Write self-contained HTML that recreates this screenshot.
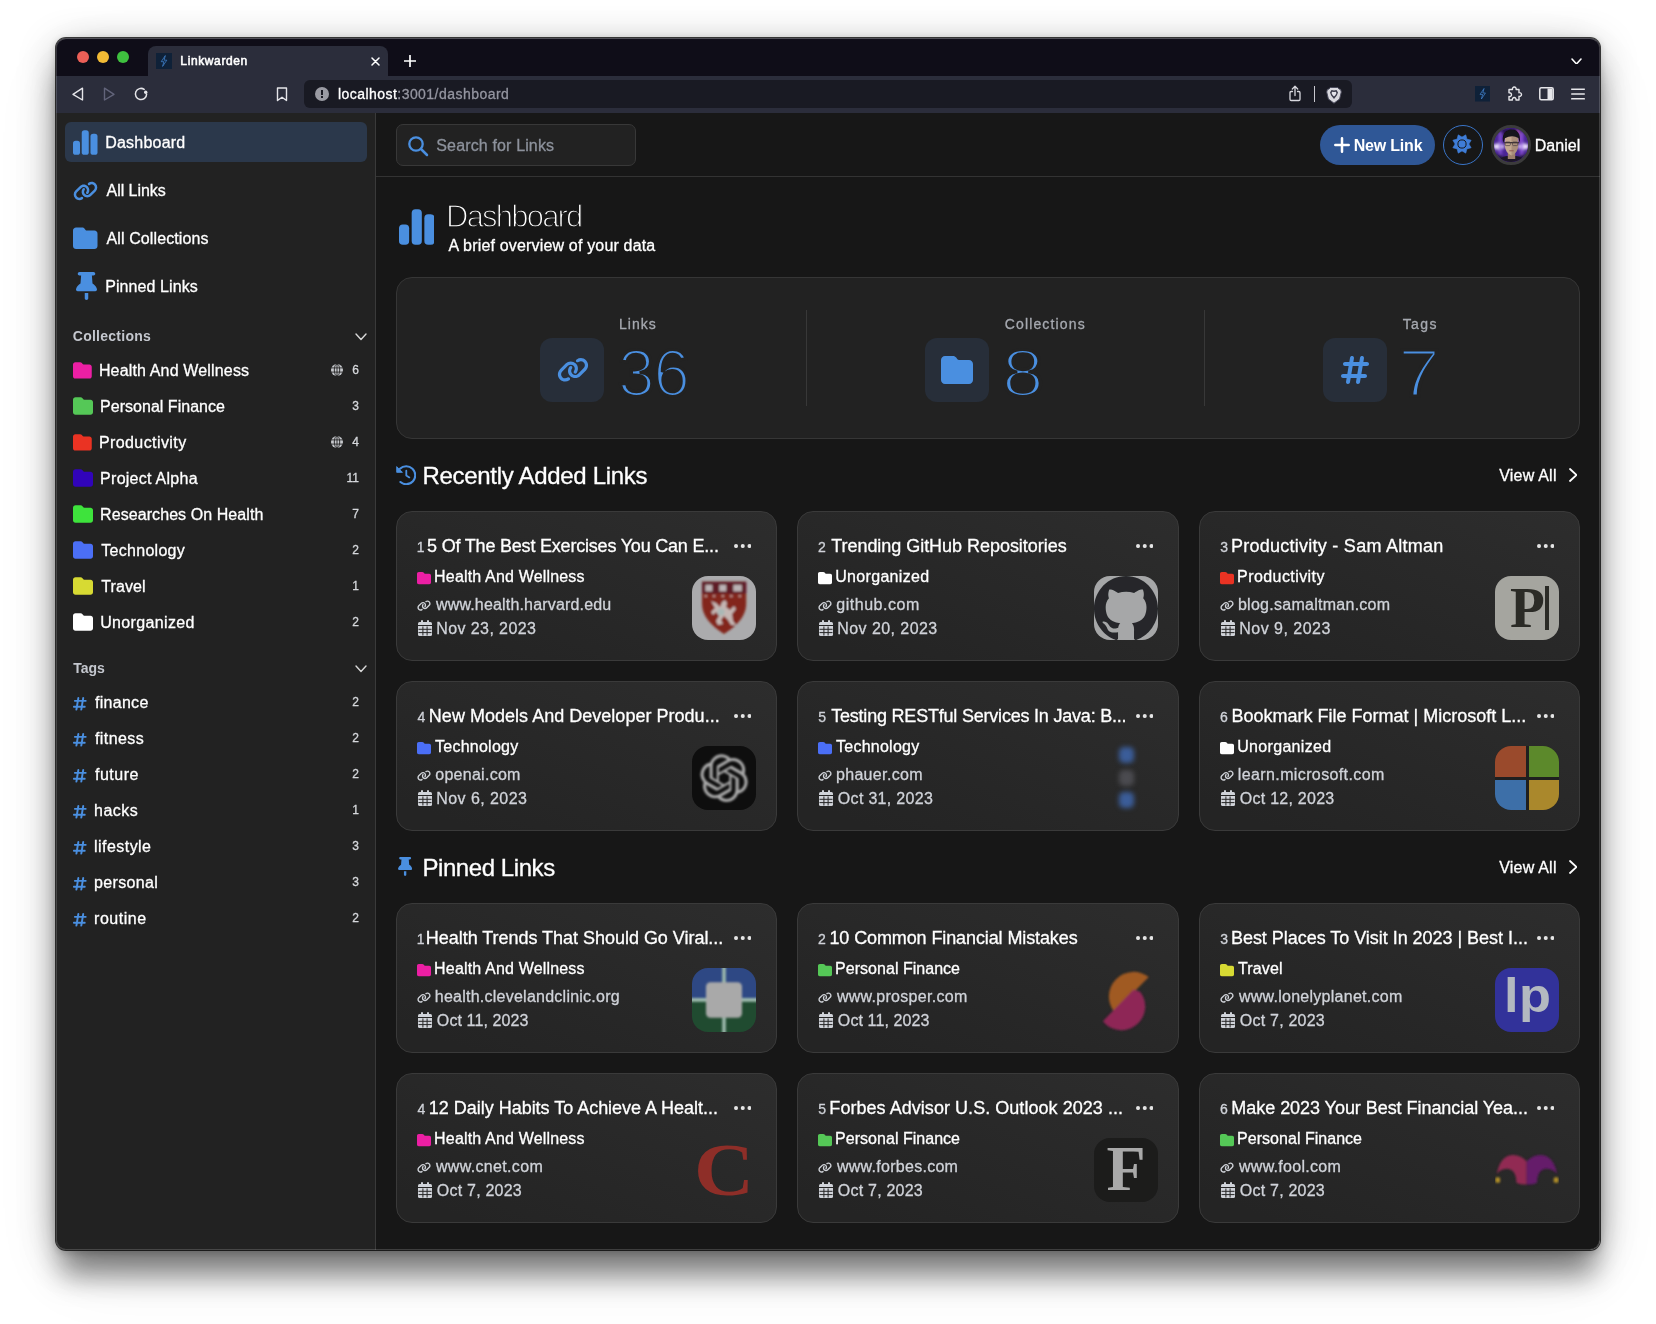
<!DOCTYPE html>
<html lang="en"><head><meta charset="utf-8"><title>Linkwarden</title>
<style>
html,body{margin:0;padding:0;background:#fff;}
body{width:1656px;height:1324px;position:relative;overflow:hidden;font-family:"Liberation Sans",sans-serif;}
#win{position:absolute;left:56px;top:38px;width:1544px;height:1212px;border-radius:10px;overflow:hidden;background:#171717;}
#shadow{position:absolute;left:56px;top:38px;width:1544px;height:1212px;border-radius:10px;box-shadow:0 0 0 1px rgba(0,0,0,.75),0 8px 42px -6px rgba(0,0,0,.42),0 32px 28px -5px rgba(0,0,0,.36),0 2px 6px 2px rgba(0,0,0,.13),0 26px 70px -12px rgba(0,0,0,.1);}
#rim{position:absolute;left:56px;top:38px;width:1544px;height:1212px;border-radius:10px;box-sizing:border-box;border:1px solid rgba(255,255,255,.17);border-top-color:rgba(255,255,255,.28);pointer-events:none;}
#abs{position:absolute;left:-56px;top:-38px;width:1656px;height:1324px;will-change:transform;}
.t{position:absolute;white-space:nowrap;line-height:1;-webkit-text-stroke:.3px;}
.card{position:absolute;box-sizing:border-box;border:1px solid #3a3a3a;border-radius:16px;background:linear-gradient(to top right,#242424 10%,#2d2d2d);}
.thin{-webkit-text-stroke:1.3px #171717;}
.thin2{-webkit-text-stroke:3.2px #222;}
</style></head><body>
<div id="shadow"></div>
<div id="win"><div id="abs">

<div style="position:absolute;left:56.00px;top:38.00px;width:1544.00px;height:38.00px;background:#0f0d18;"></div>
<div style="position:absolute;left:56.00px;top:76.00px;width:1544.00px;height:37.00px;background:#2b2d3b;"></div>
<div style="position:absolute;left:148.00px;top:46.00px;width:240.00px;height:31.00px;background:#2b2d3b;border-radius:8px 8px 0 0;"></div>
<div style="position:absolute;left:77.00px;top:51.00px;width:12.00px;height:12.00px;background:#ec5f57;border-radius:50%;"></div>
<div style="position:absolute;left:97.00px;top:51.00px;width:12.00px;height:12.00px;background:#f3bb35;border-radius:50%;"></div>
<div style="position:absolute;left:117.00px;top:51.00px;width:12.00px;height:12.00px;background:#3fc13f;border-radius:50%;"></div>
<svg style="position:absolute;left:156.00px;top:53.00px;" width="16.00" height="16.00" viewBox="0 0 16 16"><rect width="16" height="16" fill="#0f2138"/><path d="M9.300 2.600 L5.200 8.700 H7.900 L6.600 13.400 L10.800 7.200 H8.100 Z" fill="none" stroke="#3f7fc8" stroke-width="0.8" stroke-linejoin="round"/></svg>
<div class="t" style="top:55.00px;font-size:12px;color:#fff;letter-spacing:0.617px;left:180.35px;-webkit-text-stroke:.55px;">Linkwarden</div>
<svg style="position:absolute;left:371.00px;top:56.50px;" width="9.00" height="9.00" viewBox="0 0 9 9"><path d="M1 1L8 8M8 1L1 8" stroke="#fff" stroke-width="1.500" stroke-linecap="round"/></svg>
<svg style="position:absolute;left:404.00px;top:55.00px;" width="12.00" height="12.00" viewBox="0 0 12 12"><path d="M6 0.500V11.500M0.500 6H11.500" stroke="#fff" stroke-width="1.700" stroke-linecap="round"/></svg>
<svg style="position:absolute;left:1570.50px;top:57.52px;" width="11.00" height="6.95" viewBox="-1 -1 11 6.95"><polyline points="0,0 4.5,4.95 9,0" fill="none" stroke="#fff" stroke-width="1.6" stroke-linecap="round" stroke-linejoin="round"/></svg>
<svg style="position:absolute;left:71.00px;top:86.00px;" width="14.00" height="16.00" viewBox="0 0 14 16"><path d="M11.500 2.200 L2 8.300 L11.500 14 Z" fill="none" stroke="#e6e6ea" stroke-width="1.400" stroke-linejoin="round"/></svg>
<svg style="position:absolute;left:102.00px;top:86.00px;" width="14.00" height="16.00" viewBox="0 0 14 16"><path d="M2.500 2.200 L12 8.300 L2.500 14 Z" fill="none" stroke="#62647a" stroke-width="1.400" stroke-linejoin="round"/></svg>
<svg style="position:absolute;left:133.00px;top:86.00px;" width="16.00" height="16.00" viewBox="0 0 16 16"><path d="M13.600 8 A5.600 5.600 0 1 1 11.200 3.400" fill="none" stroke="#e6e6ea" stroke-width="1.500" stroke-linecap="round"/><circle cx="12.700" cy="6.200" r="1.700" fill="#e6e6ea"/></svg>
<svg style="position:absolute;left:276.00px;top:86.50px;" width="12.00" height="15.00" viewBox="0 0 12 15"><path d="M1.500 1 H10.500 V13.500 L6 10.200 L1.500 13.500 Z" fill="none" stroke="#e6e6ea" stroke-width="1.400" stroke-linejoin="round"/></svg>
<div style="position:absolute;left:304.00px;top:80.00px;width:1048.00px;height:28.00px;background:#191a23;border-radius:6px;"></div>
<div style="position:absolute;left:315.00px;top:87.00px;width:14.00px;height:14.00px;background:#9a9ba3;border-radius:50%;"></div>
<div style="position:absolute;left:321.30px;top:90.00px;width:1.60px;height:5.00px;background:#191a23;"></div>
<div style="position:absolute;left:321.30px;top:96.30px;width:1.60px;height:1.70px;background:#191a23;"></div>
<div class="t" style="top:87.00px;font-size:14px;color:#fff;letter-spacing:0.460px;left:337.90px;">localhost</div>
<div class="t" style="top:87.00px;font-size:14px;color:#9495a0;letter-spacing:0.460px;left:397.29px;">:3001/dashboard</div>
<svg style="position:absolute;left:1288.00px;top:85.00px;" width="14.00" height="17.00" viewBox="0 0 14 17"><path d="M4.500 6.500H3.200Q2 6.500 2 7.700V14.300Q2 15.500 3.200 15.500H10.800Q12 15.500 12 14.300V7.700Q12 6.500 10.800 6.500H9.500" fill="none" stroke="#d8d8de" stroke-width="1.300" stroke-linecap="round"/><path d="M7 10.500V1.500M4.300 4L7 1.300L9.700 4" fill="none" stroke="#d8d8de" stroke-width="1.300" stroke-linecap="round" stroke-linejoin="round"/></svg>
<div style="position:absolute;left:1314.00px;top:86.00px;width:1.00px;height:15.50px;background:#c8c8cf;"></div>
<svg style="position:absolute;left:1326.00px;top:85.50px;" width="16.00" height="18.00" viewBox="0 0 16 18"><path d="M4.200 1.500 H11.800 L13 3 L14.600 3.400 L15.300 6 L13.600 13 L8 17.200 L2.400 13 L0.700 6 L1.400 3.400 L3 3 Z" fill="#d9d9df" stroke="#4a4b5c" stroke-width="1"/><path d="M8 4.500 L10.500 4 L12 6.500 L10.800 9.500 L8 13 L5.200 9.500 L4 6.500 L5.500 4 Z" fill="#3a3b4a"/><path d="M8 6 L9.800 5.800 L10.500 7 L9.500 9 L8 10.500 L6.500 9 L5.500 7 L6.200 5.800Z" fill="#e4e4ea"/></svg>
<svg style="position:absolute;left:1474.50px;top:86.00px;" width="15.50" height="15.50" viewBox="0 0 16 16"><rect width="16" height="16" fill="#0f2138"/><path d="M9.300 2.600 L5.200 8.700 H7.900 L6.600 13.400 L10.800 7.200 H8.100 Z" fill="none" stroke="#3f7fc8" stroke-width="0.8" stroke-linejoin="round"/></svg>
<svg style="position:absolute;left:1505.50px;top:85.50px;" width="17.00" height="17.00" viewBox="0 0 17 17"><path d="M6.500 3.500 a1.900 1.900 0 1 1 3.600 0 H13 V6.700 a1.900 1.900 0 1 1 0 3.600 V14 H10 a1.900 1.900 0 1 0 -3.600 0 H3 V10.500 a1.900 1.900 0 1 0 0 -3.600 V3.500 Z" fill="none" stroke="#e6e6ea" stroke-width="1.400" stroke-linejoin="round"/></svg>
<svg style="position:absolute;left:1538.50px;top:87.00px;" width="15.00" height="13.50" viewBox="0 0 15 13.500"><rect x="0.800" y="0.800" width="13.400" height="11.900" rx="1.500" fill="none" stroke="#e6e6ea" stroke-width="1.500"/><rect x="8.500" y="1.500" width="5" height="10.500" fill="#e6e6ea"/></svg>
<svg style="position:absolute;left:1571.00px;top:88.00px;" width="14.00" height="12.00" viewBox="0 0 14 12"><path d="M0.700 1.200H13.300M0.700 6H13.300M0.700 10.800H13.300" stroke="#e6e6ea" stroke-width="1.500" stroke-linecap="round"/></svg>
<div style="position:absolute;left:56.00px;top:113.00px;width:319.00px;height:1137.00px;background:#222;"></div>
<div style="position:absolute;left:375.00px;top:113.00px;width:1.00px;height:1137.00px;background:#3a3a3a;"></div>
<div style="position:absolute;left:65.00px;top:122.00px;width:302.00px;height:40.00px;background:#2b384b;border-radius:6px;"></div>
<svg style="position:absolute;left:73.00px;top:129.50px;" width="24.50" height="25.00" viewBox="0 0 448 448"><g fill="#4a8fe0"><rect x="0" y="192" width="128" height="256" rx="48"/><rect x="160" y="0" width="128" height="448" rx="48"/><rect x="320" y="64" width="128" height="384" rx="48"/></g></svg>
<div class="t" style="top:135.00px;font-size:16px;color:#fff;letter-spacing:0.219px;left:105.20px;">Dashboard</div>
<svg style="position:absolute;left:72.50px;top:180.50px;" width="25.00" height="20.00" viewBox="0 0 640 512"><path fill="#4a8fe0" d="M579.8 267.7c56.5-56.5 56.5-148 0-204.5c-50-50-128.800-56.500-186.300-15.400l-1.600 1.100c-14.400 10.300-17.700 30.300-7.400 44.600s30.300 17.700 44.600 7.400l1.600-1.100c32.100-22.900 76-19.300 103.800 8.600c31.500 31.500 31.500 82.500 0 114L422.300 334.800c-31.500 31.500-82.500 31.500-114 0c-27.900-27.900-31.500-71.800-8.600-103.800l1.100-1.600c10.300-14.400 6.900-34.400-7.400-44.600s-34.400-6.900-44.600 7.400l-1.100 1.600C206.500 251.200 213 330 263 380c56.500 56.500 148 56.500 204.500 0L579.800 267.700zM60.200 244.300c-56.500 56.500-56.500 148 0 204.500c50 50 128.800 56.500 186.300 15.400l1.600-1.100c14.400-10.300 17.700-30.300 7.400-44.600s-30.300-17.700-44.600-7.400l-1.600 1.100c-32.100 22.900-76 19.300-103.800-8.600C74 372 74 321 105.500 289.500L217.700 177.200c31.500-31.500 82.500-31.500 114 0c27.900 27.900 31.500 71.800 8.600 103.900l-1.100 1.600c-10.300 14.400-6.900 34.400 7.400 44.600s34.400 6.900 44.600-7.400l1.100-1.600C433.500 260.800 427 182 377 132c-56.500-56.500-148-56.500-204.500 0L60.200 244.300z"/></svg>
<div class="t" style="top:183.00px;font-size:16px;color:#fff;letter-spacing:-0.037px;left:106.50px;">All Links</div>
<svg style="position:absolute;left:73.00px;top:226.00px;" width="24.50" height="24.50" viewBox="0 0 512 512"><path fill="#4a8fe0" d="M64 480H448c35.300 0 64-28.700 64-64V160c0-35.300-28.700-64-64-64H288c-10.100 0-19.600-4.700-25.600-12.800L243.200 57.600C231.100 41.500 212.100 32 192 32H64C28.700 32 0 60.700 0 96V416c0 35.300 28.700 64 64 64z"/></svg>
<div class="t" style="top:231.00px;font-size:16px;color:#fff;letter-spacing:0.111px;left:106.50px;">All Collections</div>
<svg style="position:absolute;left:76.00px;top:272.00px;" width="21.00" height="28.00" viewBox="0 0 384 512"><path fill="#4a8fe0" d="M32 32C32 14.300 46.300 0 64 0H320c17.700 0 32 14.300 32 32s-14.300 32-32 32H290.500l11.400 148.200c36.700 19.900 65.700 53.200 79.500 94.700l1 3c3.300 9.800 1.600 20.500-4.400 28.800s-15.700 13.300-26 13.300H32c-10.300 0-19.900-4.900-26-13.300s-7.700-19.100-4.400-28.800l1-3c13.800-41.500 42.800-74.800 79.500-94.700L93.500 64H64C46.300 64 32 49.700 32 32zM160 384h64v96c0 17.700-14.300 32-32 32s-32-14.300-32-32V384z"/></svg>
<div class="t" style="top:279.00px;font-size:16px;color:#fff;letter-spacing:0.091px;left:105.20px;">Pinned Links</div>
<div class="t" style="top:329.00px;font-size:14px;color:#c4c7ce;letter-spacing:0.265px;font-weight:700;-webkit-text-stroke:0;left:72.75px;">Collections</div>
<svg style="position:absolute;left:355.00px;top:333.25px;" width="12.00" height="7.50" viewBox="-1 -1 12 7.5"><polyline points="0,0 5.0,5.5 10,0" fill="none" stroke="#d8d8d8" stroke-width="1.4" stroke-linecap="round" stroke-linejoin="round"/></svg>
<svg style="position:absolute;left:73.10px;top:360.82px;" width="18.75" height="18.75" viewBox="0 0 512 512"><path fill="#ec1fa4" d="M64 480H448c35.300 0 64-28.700 64-64V160c0-35.300-28.700-64-64-64H288c-10.100 0-19.600-4.700-25.600-12.800L243.200 57.600C231.100 41.500 212.100 32 192 32H64C28.700 32 0 60.700 0 96V416c0 35.300 28.700 64 64 64z"/></svg>
<div class="t" style="top:363.00px;font-size:16px;color:#fff;letter-spacing:0.156px;left:98.90px;">Health And Wellness</div>
<div class="t" style="top:364.00px;font-size:12px;color:#d6d8dc;left:-241.00px;width:600px;text-align:right;">6</div>
<svg style="position:absolute;left:331.00px;top:364.00px;" width="12.00" height="12.00" viewBox="-6.0 -6.0 12 12"><circle cx="0" cy="0" r="6.0" fill="#c6c8cc"/><g stroke="#222" stroke-width="0.9" fill="none"><ellipse cx="0" cy="0" rx="2.7" ry="6.0"/><line x1="-6.0" y1="-2.0999999999999996" x2="6.0" y2="-2.0999999999999996"/><line x1="-6.0" y1="2.0999999999999996" x2="6.0" y2="2.0999999999999996"/><line x1="0" y1="-6.0" x2="0" y2="6.0"/></g></svg>
<svg style="position:absolute;left:73.10px;top:396.20px;" width="20.00" height="20.00" viewBox="0 0 512 512"><path fill="#55c857" d="M64 480H448c35.300 0 64-28.700 64-64V160c0-35.300-28.700-64-64-64H288c-10.100 0-19.600-4.700-25.600-12.800L243.200 57.600C231.100 41.500 212.100 32 192 32H64C28.700 32 0 60.700 0 96V416c0 35.300 28.700 64 64 64z"/></svg>
<div class="t" style="top:399.00px;font-size:16px;color:#fff;letter-spacing:0.020px;left:100.10px;">Personal Finance</div>
<div class="t" style="top:400.00px;font-size:12px;color:#d6d8dc;left:-241.00px;width:600px;text-align:right;">3</div>
<svg style="position:absolute;left:73.10px;top:432.82px;" width="18.75" height="18.75" viewBox="0 0 512 512"><path fill="#ea3323" d="M64 480H448c35.300 0 64-28.700 64-64V160c0-35.300-28.700-64-64-64H288c-10.100 0-19.600-4.700-25.600-12.800L243.200 57.600C231.100 41.500 212.100 32 192 32H64C28.700 32 0 60.700 0 96V416c0 35.300 28.700 64 64 64z"/></svg>
<div class="t" style="top:435.00px;font-size:16px;color:#fff;letter-spacing:0.418px;left:98.90px;">Productivity</div>
<div class="t" style="top:436.00px;font-size:12px;color:#d6d8dc;left:-241.00px;width:600px;text-align:right;">4</div>
<svg style="position:absolute;left:331.00px;top:436.00px;" width="12.00" height="12.00" viewBox="-6.0 -6.0 12 12"><circle cx="0" cy="0" r="6.0" fill="#c6c8cc"/><g stroke="#222" stroke-width="0.9" fill="none"><ellipse cx="0" cy="0" rx="2.7" ry="6.0"/><line x1="-6.0" y1="-2.0999999999999996" x2="6.0" y2="-2.0999999999999996"/><line x1="-6.0" y1="2.0999999999999996" x2="6.0" y2="2.0999999999999996"/><line x1="0" y1="-6.0" x2="0" y2="6.0"/></g></svg>
<svg style="position:absolute;left:73.10px;top:468.20px;" width="20.00" height="20.00" viewBox="0 0 512 512"><path fill="#3104ba" d="M64 480H448c35.300 0 64-28.700 64-64V160c0-35.300-28.700-64-64-64H288c-10.100 0-19.600-4.700-25.600-12.800L243.200 57.600C231.100 41.500 212.100 32 192 32H64C28.700 32 0 60.700 0 96V416c0 35.300 28.700 64 64 64z"/></svg>
<div class="t" style="top:471.00px;font-size:16px;color:#fff;letter-spacing:0.267px;left:100.10px;">Project Alpha</div>
<div class="t" style="top:472.00px;font-size:12px;color:#d6d8dc;left:-241.00px;width:600px;text-align:right;">11</div>
<svg style="position:absolute;left:73.10px;top:504.20px;" width="20.00" height="20.00" viewBox="0 0 512 512"><path fill="#3ee33c" d="M64 480H448c35.300 0 64-28.700 64-64V160c0-35.300-28.700-64-64-64H288c-10.100 0-19.600-4.700-25.600-12.800L243.200 57.600C231.100 41.500 212.100 32 192 32H64C28.700 32 0 60.700 0 96V416c0 35.300 28.700 64 64 64z"/></svg>
<div class="t" style="top:507.00px;font-size:16px;color:#fff;letter-spacing:0.071px;left:100.10px;">Researches On Health</div>
<div class="t" style="top:508.00px;font-size:12px;color:#d6d8dc;left:-241.00px;width:600px;text-align:right;">7</div>
<svg style="position:absolute;left:73.10px;top:540.20px;" width="20.00" height="20.00" viewBox="0 0 512 512"><path fill="#4b6ff6" d="M64 480H448c35.300 0 64-28.700 64-64V160c0-35.300-28.700-64-64-64H288c-10.100 0-19.600-4.700-25.600-12.800L243.200 57.600C231.100 41.500 212.100 32 192 32H64C28.700 32 0 60.700 0 96V416c0 35.300 28.700 64 64 64z"/></svg>
<div class="t" style="top:543.00px;font-size:16px;color:#fff;letter-spacing:0.289px;left:101.25px;">Technology</div>
<div class="t" style="top:544.00px;font-size:12px;color:#d6d8dc;left:-241.00px;width:600px;text-align:right;">2</div>
<svg style="position:absolute;left:73.10px;top:576.20px;" width="20.00" height="20.00" viewBox="0 0 512 512"><path fill="#d7da33" d="M64 480H448c35.300 0 64-28.700 64-64V160c0-35.300-28.700-64-64-64H288c-10.100 0-19.600-4.700-25.600-12.800L243.200 57.600C231.100 41.500 212.100 32 192 32H64C28.700 32 0 60.700 0 96V416c0 35.300 28.700 64 64 64z"/></svg>
<div class="t" style="top:579.00px;font-size:16px;color:#fff;letter-spacing:0.110px;left:101.25px;">Travel</div>
<div class="t" style="top:580.00px;font-size:12px;color:#d6d8dc;left:-241.00px;width:600px;text-align:right;">1</div>
<svg style="position:absolute;left:73.10px;top:612.20px;" width="20.00" height="20.00" viewBox="0 0 512 512"><path fill="#ffffff" d="M64 480H448c35.300 0 64-28.700 64-64V160c0-35.300-28.700-64-64-64H288c-10.100 0-19.600-4.700-25.600-12.800L243.200 57.600C231.100 41.500 212.100 32 192 32H64C28.700 32 0 60.700 0 96V416c0 35.300 28.700 64 64 64z"/></svg>
<div class="t" style="top:615.00px;font-size:16px;color:#fff;letter-spacing:0.355px;left:100.20px;">Unorganized</div>
<div class="t" style="top:616.00px;font-size:12px;color:#d6d8dc;left:-241.00px;width:600px;text-align:right;">2</div>
<div class="t" style="top:661.00px;font-size:14px;color:#c4c7ce;letter-spacing:0.017px;font-weight:700;-webkit-text-stroke:0;left:73.15px;">Tags</div>
<svg style="position:absolute;left:355.00px;top:665.25px;" width="12.00" height="7.50" viewBox="-1 -1 12 7.5"><polyline points="0,0 5.0,5.5 10,0" fill="none" stroke="#d8d8d8" stroke-width="1.4" stroke-linecap="round" stroke-linejoin="round"/></svg>
<svg style="position:absolute;left:73.10px;top:696.40px;" width="13.65" height="15.60" viewBox="0 0 448 512"><path fill="#4a8fe0" d="M181.300 32.400c17.400 2.900 29.200 19.400 26.300 36.800L197.800 128h95.100l11.500-69.300c2.900-17.400 19.400-29.200 36.800-26.300s29.200 19.400 26.300 36.800L357.800 128H416c17.700 0 32 14.300 32 32s-14.300 32-32 32H347.100L325.800 320H384c17.700 0 32 14.300 32 32s-14.300 32-32 32H315.100l-11.500 69.300c-2.900 17.400-19.400 29.200-36.800 26.300s-29.200-19.400-26.300-36.800l9.800-58.700H155.100l-11.500 69.300c-2.900 17.400-19.400 29.200-36.800 26.300s-29.200-19.400-26.300-36.800L90.200 384H32c-17.700 0-32-14.300-32-32s14.300-32 32-32h68.900l21.300-128H64c-17.700 0-32-14.300-32-32s14.300-32 32-32h68.900l11.500-69.300c2.900-17.400 19.400-29.200 36.800-26.300zM187.100 192L165.800 320h95.100l21.300-128H187.100z"/></svg>
<div class="t" style="top:695.00px;font-size:16px;color:#fff;letter-spacing:0.300px;left:94.90px;">finance</div>
<div class="t" style="top:696.00px;font-size:12px;color:#d6d8dc;left:-241.00px;width:600px;text-align:right;">2</div>
<svg style="position:absolute;left:73.10px;top:732.40px;" width="13.65" height="15.60" viewBox="0 0 448 512"><path fill="#4a8fe0" d="M181.300 32.400c17.400 2.900 29.200 19.400 26.300 36.800L197.800 128h95.100l11.500-69.300c2.900-17.400 19.400-29.200 36.800-26.300s29.200 19.400 26.300 36.800L357.800 128H416c17.700 0 32 14.300 32 32s-14.300 32-32 32H347.100L325.800 320H384c17.700 0 32 14.300 32 32s-14.300 32-32 32H315.100l-11.500 69.300c-2.900 17.400-19.400 29.200-36.800 26.300s-29.200-19.400-26.300-36.800l9.800-58.700H155.100l-11.500 69.300c-2.900 17.400-19.400 29.200-36.800 26.300s-29.200-19.400-26.300-36.800L90.200 384H32c-17.700 0-32-14.300-32-32s14.300-32 32-32h68.900l21.300-128H64c-17.700 0-32-14.300-32-32s14.300-32 32-32h68.900l11.500-69.300c2.900-17.400 19.400-29.200 36.800-26.300zM187.100 192L165.800 320h95.100l21.300-128H187.100z"/></svg>
<div class="t" style="top:731.00px;font-size:16px;color:#fff;letter-spacing:0.433px;left:94.90px;">fitness</div>
<div class="t" style="top:732.00px;font-size:12px;color:#d6d8dc;left:-241.00px;width:600px;text-align:right;">2</div>
<svg style="position:absolute;left:73.10px;top:768.40px;" width="13.65" height="15.60" viewBox="0 0 448 512"><path fill="#4a8fe0" d="M181.300 32.400c17.400 2.900 29.200 19.400 26.300 36.800L197.800 128h95.100l11.500-69.300c2.900-17.400 19.400-29.200 36.800-26.300s29.200 19.400 26.300 36.800L357.800 128H416c17.700 0 32 14.300 32 32s-14.300 32-32 32H347.100L325.800 320H384c17.700 0 32 14.300 32 32s-14.300 32-32 32H315.100l-11.500 69.300c-2.900 17.400-19.400 29.200-36.800 26.300s-29.200-19.400-26.300-36.800l9.800-58.700H155.100l-11.500 69.300c-2.900 17.400-19.400 29.200-36.800 26.300s-29.200-19.400-26.300-36.800L90.200 384H32c-17.700 0-32-14.300-32-32s14.300-32 32-32h68.900l21.300-128H64c-17.700 0-32-14.300-32-32s14.300-32 32-32h68.900l11.500-69.300c2.900-17.400 19.400-29.200 36.800-26.300zM187.100 192L165.800 320h95.100l21.300-128H187.100z"/></svg>
<div class="t" style="top:767.00px;font-size:16px;color:#fff;letter-spacing:0.540px;left:94.90px;">future</div>
<div class="t" style="top:768.00px;font-size:12px;color:#d6d8dc;left:-241.00px;width:600px;text-align:right;">2</div>
<svg style="position:absolute;left:73.10px;top:804.40px;" width="13.65" height="15.60" viewBox="0 0 448 512"><path fill="#4a8fe0" d="M181.300 32.400c17.400 2.900 29.200 19.400 26.300 36.800L197.800 128h95.100l11.500-69.300c2.900-17.400 19.400-29.200 36.800-26.300s29.200 19.400 26.300 36.800L357.800 128H416c17.700 0 32 14.300 32 32s-14.300 32-32 32H347.100L325.800 320H384c17.700 0 32 14.300 32 32s-14.300 32-32 32H315.100l-11.500 69.300c-2.900 17.400-19.400 29.200-36.800 26.300s-29.200-19.400-26.300-36.800l9.800-58.700H155.100l-11.500 69.300c-2.900 17.400-19.400 29.200-36.800 26.300s-29.200-19.400-26.300-36.800L90.200 384H32c-17.700 0-32-14.300-32-32s14.300-32 32-32h68.900l21.300-128H64c-17.700 0-32-14.300-32-32s14.300-32 32-32h68.900l11.500-69.300c2.900-17.400 19.400-29.200 36.800-26.300zM187.100 192L165.800 320h95.100l21.300-128H187.100z"/></svg>
<div class="t" style="top:803.00px;font-size:16px;color:#fff;letter-spacing:0.513px;left:94.00px;">hacks</div>
<div class="t" style="top:804.00px;font-size:12px;color:#d6d8dc;left:-241.00px;width:600px;text-align:right;">1</div>
<svg style="position:absolute;left:73.10px;top:840.40px;" width="13.65" height="15.60" viewBox="0 0 448 512"><path fill="#4a8fe0" d="M181.300 32.400c17.400 2.900 29.200 19.400 26.300 36.800L197.800 128h95.100l11.500-69.300c2.900-17.400 19.400-29.200 36.800-26.300s29.200 19.400 26.300 36.800L357.800 128H416c17.700 0 32 14.300 32 32s-14.300 32-32 32H347.100L325.800 320H384c17.700 0 32 14.300 32 32s-14.300 32-32 32H315.100l-11.500 69.300c-2.900 17.400-19.400 29.200-36.800 26.300s-29.200-19.400-26.300-36.800l9.800-58.700H155.100l-11.500 69.300c-2.900 17.400-19.400 29.200-36.800 26.300s-29.200-19.400-26.300-36.800L90.200 384H32c-17.700 0-32-14.300-32-32s14.300-32 32-32h68.900l21.300-128H64c-17.700 0-32-14.300-32-32s14.300-32 32-32h68.900l11.500-69.300c2.900-17.400 19.400-29.200 36.800-26.300zM187.100 192L165.800 320h95.100l21.300-128H187.100z"/></svg>
<div class="t" style="top:839.00px;font-size:16px;color:#fff;letter-spacing:0.450px;left:94.05px;">lifestyle</div>
<div class="t" style="top:840.00px;font-size:12px;color:#d6d8dc;left:-241.00px;width:600px;text-align:right;">3</div>
<svg style="position:absolute;left:73.10px;top:876.40px;" width="13.65" height="15.60" viewBox="0 0 448 512"><path fill="#4a8fe0" d="M181.300 32.400c17.400 2.900 29.200 19.400 26.300 36.800L197.800 128h95.100l11.500-69.300c2.900-17.400 19.400-29.200 36.800-26.300s29.200 19.400 26.300 36.800L357.800 128H416c17.700 0 32 14.300 32 32s-14.300 32-32 32H347.100L325.800 320H384c17.700 0 32 14.300 32 32s-14.300 32-32 32H315.100l-11.500 69.300c-2.900 17.400-19.400 29.200-36.800 26.300s-29.200-19.400-26.300-36.800l9.800-58.700H155.100l-11.500 69.300c-2.900 17.400-19.400 29.200-36.800 26.300s-29.200-19.400-26.300-36.800L90.200 384H32c-17.700 0-32-14.300-32-32s14.300-32 32-32h68.900l21.300-128H64c-17.700 0-32-14.300-32-32s14.300-32 32-32h68.900l11.500-69.300c2.900-17.400 19.400-29.200 36.800-26.300zM187.100 192L165.800 320h95.100l21.300-128H187.100z"/></svg>
<div class="t" style="top:875.00px;font-size:16px;color:#fff;letter-spacing:0.343px;left:94.10px;">personal</div>
<div class="t" style="top:876.00px;font-size:12px;color:#d6d8dc;left:-241.00px;width:600px;text-align:right;">3</div>
<svg style="position:absolute;left:73.10px;top:912.40px;" width="13.65" height="15.60" viewBox="0 0 448 512"><path fill="#4a8fe0" d="M181.300 32.400c17.400 2.900 29.200 19.400 26.300 36.800L197.800 128h95.100l11.500-69.300c2.900-17.400 19.400-29.200 36.800-26.300s29.200 19.400 26.300 36.800L357.800 128H416c17.700 0 32 14.300 32 32s-14.300 32-32 32H347.100L325.800 320H384c17.700 0 32 14.300 32 32s-14.300 32-32 32H315.100l-11.500 69.300c-2.900 17.400-19.400 29.200-36.800 26.300s-29.200-19.400-26.300-36.800l9.800-58.700H155.100l-11.500 69.300c-2.900 17.400-19.400 29.200-36.800 26.300s-29.200-19.400-26.300-36.800L90.200 384H32c-17.700 0-32-14.300-32-32s14.300-32 32-32h68.900l21.300-128H64c-17.700 0-32-14.300-32-32s14.300-32 32-32h68.900l11.500-69.300c2.900-17.400 19.400-29.200 36.800-26.300zM187.100 192L165.800 320h95.100l21.300-128H187.100z"/></svg>
<div class="t" style="top:911.00px;font-size:16px;color:#fff;letter-spacing:0.525px;left:94.05px;">routine</div>
<div class="t" style="top:912.00px;font-size:12px;color:#d6d8dc;left:-241.00px;width:600px;text-align:right;">2</div>
<div style="position:absolute;left:376.00px;top:176.00px;width:1224.00px;height:1.00px;background:#333;"></div>
<div style="position:absolute;left:396.00px;top:124.00px;width:240.00px;height:41.50px;box-sizing:border-box;border:1px solid #383838;border-radius:7px;background:#222;"></div>
<svg style="position:absolute;left:406.50px;top:134.50px;" width="22.00" height="22.00" viewBox="0 0 22 22"><circle cx="9" cy="9" r="6.700" fill="none" stroke="#4a8fe0" stroke-width="2.300"/><path d="M14 14L20 20" stroke="#4a8fe0" stroke-width="2.500" stroke-linecap="round"/></svg>
<div class="t" style="top:138.00px;font-size:16px;color:#8d929c;letter-spacing:0.143px;left:436.30px;">Search for Links</div>
<div style="position:absolute;left:1320.00px;top:125.00px;width:115.00px;height:40.00px;background:#2f5796;border-radius:20px;"></div>
<svg style="position:absolute;left:1334.00px;top:137.00px;" width="16.00" height="16.00" viewBox="0 0 16 16"><path d="M8 1.300V14.700M1.300 8H14.700" stroke="#fff" stroke-width="2.500" stroke-linecap="round"/></svg>
<div class="t" style="top:138.00px;font-size:16px;color:#fff;letter-spacing:-0.193px;font-weight:700;-webkit-text-stroke:0;left:1353.65px;">New Link</div>
<div style="position:absolute;left:1443.00px;top:125.00px;width:40.00px;height:40.00px;box-sizing:border-box;border:1px solid #3a75c8;border-radius:50%;"></div>
<svg style="position:absolute;left:1452.40px;top:134.10px;" width="20.00" height="20.00" viewBox="-10 -10 20 20"><polygon points="3.79,-9.15 4.88,-4.88 9.15,-3.79 6.90,0.00 9.15,3.79 4.88,4.88 3.79,9.15 0.00,6.90 -3.79,9.15 -4.88,4.88 -9.15,3.79 -6.90,0.00 -9.15,-3.79 -4.88,-4.88 -3.79,-9.15 -0.00,-6.90" fill="#3f7dd8" stroke="#3f7dd8" stroke-width="0.600" stroke-linejoin="round"/><circle r="4.100" fill="#3f7dd8" stroke="#171717" stroke-width="1"/></svg>
<div style="position:absolute;left:1491.00px;top:125.00px;width:40.00px;height:40.00px;box-sizing:border-box;border:3px solid #3b3b3b;border-radius:50%;overflow:hidden;background:#4a2596;"><svg width="34" height="34" viewBox="0 0 34 34" style="position:absolute;left:0;top:0"><defs><filter id="avb" x="-50%" y="-50%" width="200%" height="200%"><feGaussianBlur stdDeviation="1.600"/></filter><filter id="avb2" x="-50%" y="-50%" width="200%" height="200%"><feGaussianBlur stdDeviation="0.500"/></filter></defs><rect width="34" height="34" fill="#4a2596"/><g filter="url(#avb)"><rect x="0" y="0" width="34" height="7" fill="#2a1558"/><ellipse cx="4.500" cy="18.500" rx="6" ry="3" fill="#f1e4ff"/><ellipse cx="29.500" cy="18.500" rx="6" ry="3" fill="#f1e4ff"/><rect x="5" y="4" width="2.500" height="26" fill="#8b55e0"/><rect x="26.500" y="4" width="2.500" height="26" fill="#9a5ae6"/><rect x="23" y="2" width="2" height="12" fill="#c566d8"/><ellipse cx="3" cy="31" rx="7" ry="5" fill="#1c1238"/><ellipse cx="31" cy="31" rx="7" ry="5" fill="#1c1238"/></g><g filter="url(#avb2)"><path d="M3 34 Q8 27.500 13.500 28 L21.500 28 Q27 27.500 31 34Z" fill="#1d1726"/><rect x="13.800" y="23" width="7.400" height="8" fill="#9c7f6c"/><path d="M10.800 9 Q17 5 24.200 9 L24.200 18 Q23.500 25 17.500 27.500 Q11.500 25 10.800 18 Z" fill="#c3a890"/><path d="M17.500 8 L24.200 9 L24.200 18 Q23.500 25 17.500 27.500 Z" fill="#8a6f5f" opacity=".45"/><path d="M9.200 15 Q7 3.500 16 1.500 Q27.500 0.500 25.800 15 L24.400 10 Q18 6.500 10.800 10.300 Z" fill="#17121c"/><rect x="10.300" y="14" width="14.600" height="1.300" fill="#3b3033"/><rect x="11.200" y="14" width="5.200" height="3.600" rx="1" fill="none" stroke="#4a4044" stroke-width=".7"/><rect x="18.500" y="14" width="5.200" height="3.600" rx="1" fill="none" stroke="#4a4044" stroke-width=".7"/><rect x="15.300" y="22.300" width="4.400" height="1" fill="#8e5a50"/></g></svg></div>
<div class="t" style="top:138.00px;font-size:16px;color:#fff;letter-spacing:0.040px;left:1534.70px;">Daniel</div>
<svg style="position:absolute;left:398.50px;top:209.00px;" width="35.50" height="36.00" viewBox="0 0 448 448"><g fill="#4a8fe0"><rect x="0" y="192" width="128" height="256" rx="48"/><rect x="160" y="0" width="128" height="448" rx="48"/><rect x="320" y="64" width="128" height="384" rx="48"/></g></svg>
<div class="t thin" style="top:201.00px;font-size:31px;color:#fff;letter-spacing:-1.794px;left:446.05px;">Dashboard</div>
<div class="t" style="top:238.00px;font-size:16px;color:#fff;letter-spacing:0.173px;left:448.50px;">A brief overview of your data</div>
<div style="position:absolute;left:396.00px;top:277.00px;width:1184.00px;height:162.00px;box-sizing:border-box;border:1px solid #363636;border-radius:16px;background:#222;"></div>
<div style="position:absolute;left:806.00px;top:310.00px;width:1.00px;height:96.00px;background:#383838;"></div>
<div style="position:absolute;left:1204.00px;top:310.00px;width:1.00px;height:96.00px;background:#383838;"></div>
<div class="t" style="top:317.00px;font-size:14px;color:#a6a9b0;letter-spacing:1.075px;left:618.90px;">Links</div>
<div style="position:absolute;left:540.40px;top:338.00px;width:64.00px;height:64.00px;background:#272e39;border-radius:12px;"></div>
<div class="t thin2" style="top:340.00px;font-size:66px;color:#4a8fe0;letter-spacing:-1.450px;left:617.90px;">36</div>
<div class="t" style="top:317.00px;font-size:14px;color:#a6a9b0;letter-spacing:1.155px;left:1004.70px;">Collections</div>
<div style="position:absolute;left:925.00px;top:338.00px;width:64.00px;height:64.00px;background:#272e39;border-radius:12px;"></div>
<div class="t thin2" style="top:340px;left:1001.94px;font-size:66px;color:#4a8fe0;transform:scaleX(1.137);transform-origin:0 0;">8</div>
<div class="t" style="top:317.00px;font-size:14px;color:#a6a9b0;letter-spacing:1.417px;left:1402.70px;">Tags</div>
<div style="position:absolute;left:1323.00px;top:338.00px;width:64.00px;height:64.00px;background:#272e39;border-radius:12px;"></div>
<div class="t thin2" style="top:340px;left:1398.32px;font-size:66px;color:#4a8fe0;transform:scaleX(1.147);transform-origin:0 0;">7</div>
<svg style="position:absolute;left:556.50px;top:357.20px;" width="32.00" height="25.60" viewBox="0 0 640 512"><path fill="#4a8fe0" d="M579.8 267.7c56.5-56.5 56.5-148 0-204.5c-50-50-128.800-56.500-186.300-15.400l-1.600 1.100c-14.400 10.300-17.700 30.300-7.400 44.600s30.300 17.700 44.600 7.400l1.600-1.100c32.100-22.900 76-19.300 103.800 8.600c31.500 31.500 31.500 82.500 0 114L422.300 334.800c-31.500 31.500-82.500 31.500-114 0c-27.900-27.900-31.500-71.800-8.600-103.800l1.100-1.600c10.300-14.400 6.900-34.400-7.400-44.600s-34.400-6.900-44.600 7.400l-1.100 1.600C206.500 251.200 213 330 263 380c56.500 56.500 148 56.500 204.500 0L579.800 267.700zM60.200 244.300c-56.500 56.500-56.500 148 0 204.500c50 50 128.800 56.500 186.300 15.400l1.600-1.100c14.400-10.300 17.700-30.300 7.400-44.600s-30.300-17.700-44.600-7.400l-1.600 1.100c-32.100 22.900-76 19.300-103.800-8.600C74 372 74 321 105.500 289.500L217.700 177.200c31.500-31.500 82.500-31.500 114 0c27.900 27.900 31.500 71.800 8.600 103.900l-1.100 1.600c-10.300 14.400-6.900 34.400 7.400 44.600s34.400 6.900 44.600-7.400l1.100-1.600C433.500 260.800 427 182 377 132c-56.500-56.500-148-56.500-204.500 0L60.200 244.300z"/></svg>
<svg style="position:absolute;left:941.00px;top:354.00px;" width="32.00" height="32.00" viewBox="0 0 512 512"><path fill="#4a8fe0" d="M64 480H448c35.300 0 64-28.700 64-64V160c0-35.300-28.700-64-64-64H288c-10.100 0-19.600-4.700-25.600-12.800L243.200 57.600C231.100 41.500 212.100 32 192 32H64C28.700 32 0 60.700 0 96V416c0 35.300 28.700 64 64 64z"/></svg>
<svg style="position:absolute;left:1341.00px;top:354.00px;" width="28.00" height="32.00" viewBox="0 0 448 512"><path fill="#4a8fe0" d="M181.300 32.400c17.400 2.900 29.200 19.400 26.300 36.800L197.800 128h95.100l11.500-69.300c2.900-17.400 19.400-29.200 36.800-26.300s29.200 19.400 26.300 36.800L357.800 128H416c17.700 0 32 14.300 32 32s-14.300 32-32 32H347.100L325.800 320H384c17.700 0 32 14.300 32 32s-14.300 32-32 32H315.100l-11.500 69.300c-2.900 17.400-19.400 29.200-36.800 26.300s-29.200-19.400-26.300-36.800l9.800-58.700H155.100l-11.500 69.300c-2.900 17.400-19.400 29.200-36.800 26.300s-29.200-19.400-26.300-36.800L90.200 384H32c-17.700 0-32-14.300-32-32s14.300-32 32-32h68.900l21.300-128H64c-17.700 0-32-14.300-32-32s14.300-32 32-32h68.900l11.500-69.300c2.900-17.400 19.400-29.200 36.800-26.300zM187.100 192L165.800 320h95.100l21.300-128H187.100z"/></svg>
<svg style="position:absolute;left:395.80px;top:464.90px;" width="20.20" height="20.20" viewBox="0 0 20 20"><path d="M3.900 3.800 A8.900 8.900 0 1 1 4.400 16.900" fill="none" stroke="#4a8fe0" stroke-width="2.100" stroke-linecap="round"/><path d="M0.700 1.600 V7.300 H6.400 Z" fill="#4a8fe0" stroke="#4a8fe0" stroke-width="0.900" stroke-linejoin="round"/><path d="M10.200 5.600 V10.300 L13.200 12.300" fill="none" stroke="#4a8fe0" stroke-width="1.800" stroke-linecap="round" stroke-linejoin="round"/></svg>
<div class="t" style="top:464.00px;font-size:24px;color:#fff;letter-spacing:-0.300px;left:422.45px;">Recently Added Links</div>
<div class="t" style="top:468.00px;font-size:16px;color:#fff;letter-spacing:0.207px;left:1499.25px;">View All</div>
<svg style="position:absolute;left:1568.70px;top:468.00px;" width="8.60" height="14.00" viewBox="-1 -1 8.600000000000001 14"><polyline points="0,0 6.6000000000000005,6.0 0,12" fill="none" stroke="#fff" stroke-width="1.8" stroke-linecap="round" stroke-linejoin="round"/></svg>
<svg style="position:absolute;left:398.00px;top:857.00px;" width="14.25" height="19.00" viewBox="0 0 384 512"><path fill="#4a8fe0" d="M32 32C32 14.300 46.300 0 64 0H320c17.700 0 32 14.300 32 32s-14.300 32-32 32H290.500l11.400 148.200c36.700 19.900 65.700 53.200 79.500 94.700l1 3c3.300 9.800 1.600 20.500-4.400 28.800s-15.700 13.300-26 13.300H32c-10.300 0-19.900-4.900-26-13.300s-7.700-19.100-4.400-28.800l1-3c13.800-41.500 42.800-74.800 79.500-94.700L93.500 64H64C46.300 64 32 49.700 32 32zM160 384h64v96c0 17.700-14.300 32-32 32s-32-14.300-32-32V384z"/></svg>
<div class="t" style="top:856.00px;font-size:24px;color:#fff;letter-spacing:-0.430px;left:422.45px;">Pinned Links</div>
<div class="t" style="top:860.00px;font-size:16px;color:#fff;letter-spacing:0.207px;left:1499.25px;">View All</div>
<svg style="position:absolute;left:1568.70px;top:860.00px;" width="8.60" height="14.00" viewBox="-1 -1 8.600000000000001 14"><polyline points="0,0 6.6000000000000005,6.0 0,12" fill="none" stroke="#fff" stroke-width="1.8" stroke-linecap="round" stroke-linejoin="round"/></svg>
<div class="card" style="left:396px;top:511px;width:381px;height:150px;"></div>
<div class="t" style="top:540.00px;font-size:14px;color:#d0d3d9;left:416.65px;">1</div>
<div class="t" style="top:537.00px;font-size:18px;color:#fff;letter-spacing:-0.201px;left:427.10px;">5 Of The Best Exercises You Can E...</div>
<svg style="position:absolute;left:733.50px;top:544.19px;" width="17.50" height="4.03" viewBox="0 0 17.5 4.025"><g fill="#e4e4e4"><circle cx="2.0125" cy="2.0125" r="2.0125"/><circle cx="8.75" cy="2.0125" r="2.0125"/><circle cx="15.4875" cy="2.0125" r="2.0125"/></g></svg>
<svg style="position:absolute;left:417.00px;top:571.00px;" width="14.00" height="14.00" viewBox="0 0 512 512"><path fill="#ec1fa4" d="M64 480H448c35.300 0 64-28.700 64-64V160c0-35.300-28.700-64-64-64H288c-10.100 0-19.600-4.700-25.600-12.800L243.200 57.600C231.100 41.500 212.100 32 192 32H64C28.700 32 0 60.700 0 96V416c0 35.300 28.700 64 64 64z"/></svg>
<div class="t" style="top:569.00px;font-size:16px;color:#fff;letter-spacing:0.172px;left:434.10px;">Health And Wellness</div>
<svg style="position:absolute;left:417.00px;top:600.40px;" width="14.00" height="11.20" viewBox="0 0 640 512"><path fill="#d0d3d9" d="M579.8 267.7c56.5-56.5 56.5-148 0-204.5c-50-50-128.800-56.500-186.300-15.400l-1.600 1.100c-14.400 10.300-17.700 30.300-7.400 44.600s30.300 17.700 44.600 7.400l1.600-1.100c32.100-22.900 76-19.300 103.800 8.600c31.500 31.500 31.500 82.500 0 114L422.300 334.800c-31.500 31.500-82.500 31.500-114 0c-27.900-27.900-31.500-71.800-8.600-103.800l1.100-1.600c10.300-14.400 6.900-34.400-7.400-44.600s-34.400-6.900-44.600 7.400l-1.100 1.600C206.500 251.200 213 330 263 380c56.500 56.500 148 56.500 204.500 0L579.800 267.700zM60.200 244.300c-56.500 56.500-56.500 148 0 204.500c50 50 128.800 56.500 186.300 15.400l1.600-1.100c14.400-10.300 17.700-30.300 7.400-44.600s-30.300-17.700-44.600-7.400l-1.600 1.100c-32.100 22.900-76 19.300-103.800-8.600C74 372 74 321 105.500 289.500L217.700 177.200c31.500-31.500 82.500-31.500 114 0c27.900 27.900 31.500 71.800 8.600 103.900l-1.100 1.600c-10.300 14.400-6.900 34.400 7.400 44.600s34.400 6.900 44.600-7.400l1.100-1.600C433.500 260.800 427 182 377 132c-56.500-56.500-148-56.500-204.500 0L60.200 244.300z"/></svg>
<div class="t" style="top:597.00px;font-size:16px;color:#d0d3d9;letter-spacing:0.174px;left:435.95px;">www.health.harvard.edu</div>
<svg style="position:absolute;left:417.70px;top:620.20px;" width="14.00" height="16.00" viewBox="0 0 14 16"><g fill="#d0d3d9"><rect x="3" y="0" width="2" height="4" rx="1"/><rect x="9" y="0" width="2" height="4" rx="1"/><path d="M0 3.5 Q0 2 1.500 2 H12.500 Q14 2 14 3.500 V5 H0Z"/><path d="M0 6 H14 V14.500 Q14 16 12.500 16 H1.500 Q0 16 0 14.500Z"/></g><g stroke="#262626" stroke-width="1" fill="none"><path d="M4.900 6.500V15.500M9.100 6.500V15.500M0.500 9.300H13.500M0.500 12.600H13.500"/></g></svg>
<div class="t" style="top:621.00px;font-size:16px;color:#d0d3d9;letter-spacing:0.400px;left:436.30px;">Nov 23, 2023</div>
<div style="position:absolute;left:692px;top:576px;width:64px;height:64px;border-radius:16px;overflow:hidden;background:#ababad;"><svg width="64" height="64" viewBox="0 0 64 64" style="position:absolute;left:0;top:0"><defs><filter id="fb" x="-20%" y="-20%" width="140%" height="140%"><feGaussianBlur stdDeviation="0.800"/></filter></defs><g filter="url(#fb)"><path d="M10 5.700 H54.200 V28 Q54.200 44 32 58 Q10 44 10 28 Z" fill="#83281f"/><path d="M10 5.700H54.200V17.500H10Z" fill="#5f1f26"/><rect x="13.400" y="8.800" width="7" height="6.600" fill="#bbb3b5"/><rect x="27.300" y="8.800" width="7" height="6.600" fill="#bbb3b5"/><rect x="41.300" y="8.800" width="8.500" height="6.600" fill="#bbb3b5"/><rect x="12.5" y="19" width="2.600" height="2.200" fill="#b88a84"/><rect x="20.7" y="19" width="2.600" height="2.200" fill="#b88a84"/><rect x="29.5" y="19" width="2.600" height="2.200" fill="#b88a84"/><rect x="38" y="19" width="2.600" height="2.200" fill="#b88a84"/><rect x="46.5" y="19" width="2.600" height="2.200" fill="#b88a84"/><path d="M19 25 L24 27 L28 31 L30 26 L33 24 L35 27 L34 31 L38 34 L42 30 L44 33 L40 38 L41 45 L44 49 L39 49 L36 44 L32 40 L29 44 L31 48 L26 49 L24 45 L27 40 L24 36 L21 39 L19 36 L23 32 Z" fill="#c4b6b3"/><circle cx="29" cy="36" r="3.500" fill="#aab8b6"/></g></svg></div>
<div class="card" style="left:797px;top:511px;width:382px;height:150px;"></div>
<div class="t" style="top:540.00px;font-size:14px;color:#d0d3d9;left:818.00px;">2</div>
<div class="t" style="top:537.00px;font-size:18px;color:#fff;letter-spacing:-0.037px;left:831.20px;">Trending GitHub Repositories</div>
<svg style="position:absolute;left:1135.50px;top:544.19px;" width="17.50" height="4.03" viewBox="0 0 17.5 4.025"><g fill="#e4e4e4"><circle cx="2.0125" cy="2.0125" r="2.0125"/><circle cx="8.75" cy="2.0125" r="2.0125"/><circle cx="15.4875" cy="2.0125" r="2.0125"/></g></svg>
<svg style="position:absolute;left:818.00px;top:571.00px;" width="14.00" height="14.00" viewBox="0 0 512 512"><path fill="#ffffff" d="M64 480H448c35.300 0 64-28.700 64-64V160c0-35.300-28.700-64-64-64H288c-10.100 0-19.600-4.700-25.600-12.800L243.200 57.600C231.100 41.500 212.100 32 192 32H64C28.700 32 0 60.700 0 96V416c0 35.300 28.700 64 64 64z"/></svg>
<div class="t" style="top:569.00px;font-size:16px;color:#fff;letter-spacing:0.325px;left:835.20px;">Unorganized</div>
<svg style="position:absolute;left:818.00px;top:600.40px;" width="14.00" height="11.20" viewBox="0 0 640 512"><path fill="#d0d3d9" d="M579.8 267.7c56.5-56.5 56.5-148 0-204.5c-50-50-128.800-56.500-186.300-15.400l-1.600 1.100c-14.400 10.300-17.700 30.300-7.400 44.600s30.300 17.700 44.600 7.400l1.600-1.100c32.100-22.900 76-19.300 103.800 8.600c31.500 31.500 31.500 82.500 0 114L422.300 334.800c-31.500 31.500-82.500 31.500-114 0c-27.900-27.900-31.500-71.800-8.600-103.800l1.100-1.600c10.300-14.400 6.900-34.400-7.400-44.600s-34.400-6.900-44.600 7.400l-1.100 1.600C206.500 251.200 213 330 263 380c56.500 56.500 148 56.500 204.500 0L579.800 267.700zM60.200 244.300c-56.500 56.500-56.500 148 0 204.500c50 50 128.800 56.500 186.300 15.400l1.600-1.100c14.400-10.300 17.700-30.300 7.400-44.600s-30.300-17.700-44.600-7.400l-1.600 1.100c-32.100 22.900-76 19.300-103.800-8.600C74 372 74 321 105.500 289.500L217.700 177.200c31.500-31.500 82.500-31.500 114 0c27.900 27.900 31.500 71.800 8.600 103.900l-1.100 1.600c-10.300 14.400-6.900 34.400 7.400 44.600s34.400 6.900 44.600-7.400l1.100-1.600C433.500 260.800 427 182 377 132c-56.500-56.500-148-56.500-204.500 0L60.200 244.300z"/></svg>
<div class="t" style="top:597.00px;font-size:16px;color:#d0d3d9;letter-spacing:0.533px;left:836.25px;">github.com</div>
<svg style="position:absolute;left:818.70px;top:620.20px;" width="14.00" height="16.00" viewBox="0 0 14 16"><g fill="#d0d3d9"><rect x="3" y="0" width="2" height="4" rx="1"/><rect x="9" y="0" width="2" height="4" rx="1"/><path d="M0 3.5 Q0 2 1.500 2 H12.500 Q14 2 14 3.500 V5 H0Z"/><path d="M0 6 H14 V14.500 Q14 16 12.500 16 H1.500 Q0 16 0 14.500Z"/></g><g stroke="#262626" stroke-width="1" fill="none"><path d="M4.900 6.500V15.500M9.100 6.500V15.500M0.500 9.300H13.500M0.500 12.600H13.500"/></g></svg>
<div class="t" style="top:621.00px;font-size:16px;color:#d0d3d9;letter-spacing:0.436px;left:837.30px;">Nov 20, 2023</div>
<div style="position:absolute;left:1094px;top:576px;width:64px;height:64px;border-radius:16px;overflow:hidden;background:#a6a7a8;"><svg width="64" height="64" viewBox="0 0 16 16" preserveAspectRatio="none" style="position:absolute;left:0;top:0"><defs><filter id="fbg" x="-10%" y="-10%" width="120%" height="120%"><feGaussianBlur stdDeviation="0.120"/></filter></defs><path filter="url(#fbg)" fill="#26282b" transform="scale(1 1.025)" d="M8 0C3.58 0 0 3.58 0 8c0 3.54 2.29 6.53 5.47 7.59.4.07.55-.17.55-.38 0-.19-.01-.82-.01-1.49-2.01.37-2.53-.49-2.69-.94-.09-.23-.48-.94-.82-1.13-.28-.15-.68-.52-.01-.53.63-.01 1.08.58 1.23.82.72 1.21 1.87.87 2.33.66.07-.52.28-.87.51-1.07-1.78-.2-3.64-.89-3.64-3.95 0-.87.31-1.59.82-2.15-.08-.2-.36-1.02.08-2.12 0 0 .67-.21 2.2.82.64-.18 1.32-.27 2-.27.68 0 1.36.09 2 .27 1.53-1.04 2.2-.82 2.2-.82.44 1.1.16 1.92.08 2.12.51.56.82 1.27.82 2.15 0 3.07-1.87 3.75-3.65 3.95.29.25.54.73.54 1.48 0 1.07-.01 1.93-.01 2.2 0 .21.15.46.55.38A8.013 8.013 0 0016 8c0-4.420-3.580-8-8-8z"/></svg></div>
<div class="card" style="left:1199px;top:511px;width:381px;height:150px;"></div>
<div class="t" style="top:540.00px;font-size:14px;color:#d0d3d9;left:1220.20px;">3</div>
<div class="t" style="top:537.00px;font-size:18px;color:#fff;letter-spacing:0.260px;left:1230.95px;">Productivity - Sam Altman</div>
<svg style="position:absolute;left:1536.50px;top:544.19px;" width="17.50" height="4.03" viewBox="0 0 17.5 4.025"><g fill="#e4e4e4"><circle cx="2.0125" cy="2.0125" r="2.0125"/><circle cx="8.75" cy="2.0125" r="2.0125"/><circle cx="15.4875" cy="2.0125" r="2.0125"/></g></svg>
<svg style="position:absolute;left:1220.00px;top:571.00px;" width="14.00" height="14.00" viewBox="0 0 512 512"><path fill="#ea3323" d="M64 480H448c35.300 0 64-28.700 64-64V160c0-35.300-28.700-64-64-64H288c-10.100 0-19.600-4.700-25.600-12.800L243.200 57.600C231.100 41.500 212.100 32 192 32H64C28.700 32 0 60.700 0 96V416c0 35.300 28.700 64 64 64z"/></svg>
<div class="t" style="top:569.00px;font-size:16px;color:#fff;letter-spacing:0.418px;left:1237.10px;">Productivity</div>
<svg style="position:absolute;left:1220.00px;top:600.40px;" width="14.00" height="11.20" viewBox="0 0 640 512"><path fill="#d0d3d9" d="M579.8 267.7c56.5-56.5 56.5-148 0-204.5c-50-50-128.800-56.500-186.300-15.400l-1.600 1.100c-14.400 10.300-17.700 30.300-7.400 44.600s30.300 17.700 44.600 7.400l1.600-1.100c32.100-22.900 76-19.300 103.800 8.600c31.500 31.500 31.500 82.500 0 114L422.300 334.800c-31.500 31.500-82.500 31.500-114 0c-27.900-27.900-31.500-71.800-8.600-103.800l1.100-1.600c10.300-14.400 6.900-34.400-7.400-44.600s-34.400-6.900-44.600 7.400l-1.100 1.600C206.500 251.200 213 330 263 380c56.500 56.500 148 56.500 204.500 0L579.800 267.700zM60.200 244.300c-56.500 56.500-56.500 148 0 204.500c50 50 128.800 56.500 186.300 15.400l1.600-1.100c14.400-10.300 17.700-30.300 7.400-44.600s-30.300-17.700-44.600-7.400l-1.600 1.100c-32.100 22.900-76 19.300-103.800-8.600C74 372 74 321 105.500 289.500L217.700 177.200c31.500-31.500 82.500-31.500 114 0c27.900 27.900 31.500 71.800 8.600 103.900l-1.100 1.600c-10.300 14.400-6.900 34.400 7.400 44.600s34.400 6.900 44.600-7.400l1.100-1.600C433.500 260.800 427 182 377 132c-56.500-56.500-148-56.500-204.500 0L60.200 244.300z"/></svg>
<div class="t" style="top:597.00px;font-size:16px;color:#d0d3d9;letter-spacing:0.271px;left:1237.90px;">blog.samaltman.com</div>
<svg style="position:absolute;left:1220.70px;top:620.20px;" width="14.00" height="16.00" viewBox="0 0 14 16"><g fill="#d0d3d9"><rect x="3" y="0" width="2" height="4" rx="1"/><rect x="9" y="0" width="2" height="4" rx="1"/><path d="M0 3.5 Q0 2 1.500 2 H12.500 Q14 2 14 3.500 V5 H0Z"/><path d="M0 6 H14 V14.500 Q14 16 12.500 16 H1.500 Q0 16 0 14.500Z"/></g><g stroke="#262626" stroke-width="1" fill="none"><path d="M4.900 6.500V15.500M9.100 6.500V15.500M0.500 9.300H13.500M0.500 12.600H13.500"/></g></svg>
<div class="t" style="top:621.00px;font-size:16px;color:#d0d3d9;letter-spacing:0.470px;left:1239.30px;">Nov 9, 2023</div>
<div style="position:absolute;left:1495px;top:576px;width:64px;height:64px;border-radius:16px;overflow:hidden;background:#a5a59f;"><div class="t" style="left:15px;top:2.500px;font-family:'Liberation Serif',serif;font-weight:700;font-size:57px;color:#2b2b26;-webkit-text-stroke:0;filter:blur(.4px)">P</div><div style="position:absolute;left:49.800px;top:9.700px;width:4px;height:44.300px;background:#2b2b26;filter:blur(.4px)"></div></div>
<div class="card" style="left:396px;top:681px;width:381px;height:150px;"></div>
<div class="t" style="top:710.00px;font-size:14px;color:#d0d3d9;left:417.40px;">4</div>
<div class="t" style="top:707.00px;font-size:18px;color:#fff;letter-spacing:0.022px;left:428.85px;">New Models And Developer Produ...</div>
<svg style="position:absolute;left:733.50px;top:714.19px;" width="17.50" height="4.03" viewBox="0 0 17.5 4.025"><g fill="#e4e4e4"><circle cx="2.0125" cy="2.0125" r="2.0125"/><circle cx="8.75" cy="2.0125" r="2.0125"/><circle cx="15.4875" cy="2.0125" r="2.0125"/></g></svg>
<svg style="position:absolute;left:417.00px;top:741.00px;" width="14.00" height="14.00" viewBox="0 0 512 512"><path fill="#4b6ff6" d="M64 480H448c35.300 0 64-28.700 64-64V160c0-35.300-28.700-64-64-64H288c-10.100 0-19.600-4.700-25.600-12.800L243.200 57.600C231.100 41.500 212.100 32 192 32H64C28.700 32 0 60.700 0 96V416c0 35.300 28.700 64 64 64z"/></svg>
<div class="t" style="top:739.00px;font-size:16px;color:#fff;letter-spacing:0.244px;left:435.05px;">Technology</div>
<svg style="position:absolute;left:417.00px;top:770.40px;" width="14.00" height="11.20" viewBox="0 0 640 512"><path fill="#d0d3d9" d="M579.8 267.7c56.5-56.5 56.5-148 0-204.5c-50-50-128.800-56.500-186.300-15.400l-1.600 1.100c-14.400 10.300-17.700 30.300-7.400 44.600s30.300 17.700 44.600 7.400l1.600-1.100c32.100-22.900 76-19.300 103.800 8.600c31.500 31.500 31.500 82.500 0 114L422.300 334.800c-31.500 31.500-82.500 31.500-114 0c-27.900-27.900-31.500-71.800-8.600-103.800l1.100-1.600c10.300-14.400 6.900-34.400-7.400-44.600s-34.400-6.900-44.600 7.400l-1.100 1.600C206.500 251.200 213 330 263 380c56.500 56.500 148 56.500 204.500 0L579.800 267.700zM60.200 244.300c-56.500 56.500-56.500 148 0 204.500c50 50 128.800 56.500 186.300 15.400l1.600-1.100c14.400-10.300 17.700-30.300 7.400-44.600s-30.300-17.700-44.600-7.400l-1.600 1.100c-32.100 22.900-76 19.300-103.800-8.600C74 372 74 321 105.500 289.500L217.700 177.200c31.500-31.500 82.500-31.500 114 0c27.900 27.900 31.500 71.800 8.600 103.900l-1.100 1.600c-10.300 14.400-6.900 34.400 7.400 44.600s34.400 6.900 44.600-7.400l1.100-1.600C433.500 260.800 427 182 377 132c-56.500-56.500-148-56.500-204.500 0L60.200 244.300z"/></svg>
<div class="t" style="top:767.00px;font-size:16px;color:#d0d3d9;letter-spacing:0.272px;left:435.25px;">openai.com</div>
<svg style="position:absolute;left:417.70px;top:790.20px;" width="14.00" height="16.00" viewBox="0 0 14 16"><g fill="#d0d3d9"><rect x="3" y="0" width="2" height="4" rx="1"/><rect x="9" y="0" width="2" height="4" rx="1"/><path d="M0 3.5 Q0 2 1.500 2 H12.500 Q14 2 14 3.500 V5 H0Z"/><path d="M0 6 H14 V14.500 Q14 16 12.500 16 H1.500 Q0 16 0 14.500Z"/></g><g stroke="#262626" stroke-width="1" fill="none"><path d="M4.900 6.500V15.500M9.100 6.500V15.500M0.500 9.300H13.500M0.500 12.600H13.500"/></g></svg>
<div class="t" style="top:791.00px;font-size:16px;color:#d0d3d9;letter-spacing:0.430px;left:436.30px;">Nov 6, 2023</div>
<div style="position:absolute;left:692px;top:746px;width:64px;height:64px;border-radius:16px;overflow:hidden;background:#0e0e0e;"><svg width="64" height="64" viewBox="0 0 64 64" style="position:absolute;left:0;top:0"><defs><filter id="fbo" x="-20%" y="-20%" width="140%" height="140%"><feGaussianBlur stdDeviation="0.450"/></filter></defs><g filter="url(#fbo)" transform="translate(8.200 8.300) scale(1.99)"><path fill="#a9a9a9" d="M22.2819 9.8211a5.9847 5.9847 0 0 0-.5157-4.9108 6.0462 6.0462 0 0 0-6.5098-2.9A6.0651 6.0651 0 0 0 4.9807 4.1818a5.9847 5.9847 0 0 0-3.9977 2.9 6.0462 6.0462 0 0 0 .7427 7.0966 5.98 5.98 0 0 0 .511 4.9107 6.051 6.051 0 0 0 6.5146 2.9001A5.9847 5.9847 0 0 0 13.2599 24a6.0557 6.0557 0 0 0 5.7718-4.2058 5.9894 5.9894 0 0 0 3.9977-2.9001 6.0557 6.0557 0 0 0-.7475-7.0729zm-9.022 12.6081a4.4755 4.4755 0 0 1-2.8764-1.0408l.1419-.0804 4.7783-2.7582a.7948.7948 0 0 0 .3927-.6813v-6.7369l2.02 1.1686a.071.071 0 0 1 .038.052v5.5826a4.504 4.504 0 0 1-4.4945 4.4944zm-9.6607-4.1254a4.4708 4.4708 0 0 1-.5346-3.0137l.142.0852 4.783 2.7582a.7712.7712 0 0 0 .7806 0l5.8428-3.3685v2.3324a.0804.0804 0 0 1-.0332.0615L9.74 19.9502a4.4992 4.4992 0 0 1-6.1408-1.6464zM2.3408 7.8956a4.485 4.485 0 0 1 2.3655-1.9728V11.6a.7664.7664 0 0 0 .3879.6765l5.8144 3.3543-2.0201 1.1685a.0757.0757 0 0 1-.071 0l-4.8303-2.7865A4.504 4.504 0 0 1 2.3408 7.872zm16.5963 3.8558L13.1038 8.364 15.1192 7.2a.0757.0757 0 0 1 .071 0l4.8303 2.7913a4.4944 4.4944 0 0 1-.6765 8.1042v-5.6772a.79.79 0 0 0-.407-.667zm2.0107-3.0231l-.142-.0852-4.7735-2.7818a.7759.7759 0 0 0-.7854 0L9.409 9.2297V6.8974a.0662.0662 0 0 1 .0284-.0615l4.8303-2.7866a4.4992 4.4992 0 0 1 6.6802 4.66zM8.3065 12.863l-2.02-1.1638a.0804.0804 0 0 1-.038-.0567V6.0742a4.4992 4.4992 0 0 1 7.3757-3.4537l-.142.0805L8.704 5.459a.7948.7948 0 0 0-.3927.6813zm1.0976-2.3654l2.602-1.4998 2.6069 1.4998v2.9994l-2.5974 1.4997-2.6067-1.4997Z"/></g></svg></div>
<div class="card" style="left:797px;top:681px;width:382px;height:150px;"></div>
<div class="t" style="top:710.00px;font-size:14px;color:#d0d3d9;left:818.15px;">5</div>
<div class="t" style="top:707.00px;font-size:18px;color:#fff;letter-spacing:-0.208px;left:831.20px;">Testing RESTful Services In Java: B...</div>
<svg style="position:absolute;left:1135.50px;top:714.19px;" width="17.50" height="4.03" viewBox="0 0 17.5 4.025"><g fill="#e4e4e4"><circle cx="2.0125" cy="2.0125" r="2.0125"/><circle cx="8.75" cy="2.0125" r="2.0125"/><circle cx="15.4875" cy="2.0125" r="2.0125"/></g></svg>
<svg style="position:absolute;left:818.00px;top:741.00px;" width="14.00" height="14.00" viewBox="0 0 512 512"><path fill="#4b6ff6" d="M64 480H448c35.300 0 64-28.700 64-64V160c0-35.300-28.700-64-64-64H288c-10.100 0-19.600-4.700-25.600-12.800L243.200 57.600C231.100 41.500 212.100 32 192 32H64C28.700 32 0 60.700 0 96V416c0 35.300 28.700 64 64 64z"/></svg>
<div class="t" style="top:739.00px;font-size:16px;color:#fff;letter-spacing:0.244px;left:836.05px;">Technology</div>
<svg style="position:absolute;left:818.00px;top:770.40px;" width="14.00" height="11.20" viewBox="0 0 640 512"><path fill="#d0d3d9" d="M579.8 267.7c56.5-56.5 56.5-148 0-204.5c-50-50-128.800-56.500-186.300-15.400l-1.600 1.100c-14.400 10.300-17.700 30.300-7.400 44.600s30.300 17.700 44.600 7.400l1.600-1.100c32.100-22.900 76-19.300 103.800 8.600c31.500 31.500 31.500 82.500 0 114L422.300 334.800c-31.500 31.500-82.500 31.500-114 0c-27.900-27.900-31.500-71.800-8.600-103.800l1.100-1.600c10.300-14.400 6.900-34.400-7.400-44.600s-34.400-6.900-44.600 7.400l-1.100 1.600C206.500 251.200 213 330 263 380c56.500 56.500 148 56.500 204.500 0L579.800 267.700zM60.200 244.300c-56.500 56.500-56.500 148 0 204.500c50 50 128.800 56.500 186.300 15.400l1.600-1.100c14.400-10.300 17.700-30.300 7.400-44.600s-30.300-17.700-44.600-7.400l-1.600 1.100c-32.100 22.900-76 19.300-103.800-8.600C74 372 74 321 105.500 289.500L217.700 177.200c31.500-31.500 82.500-31.500 114 0c27.900 27.900 31.500 71.800 8.600 103.900l-1.100 1.600c-10.300 14.400-6.900 34.400 7.400 44.600s34.400 6.900 44.600-7.400l1.100-1.600C433.500 260.800 427 182 377 132c-56.500-56.500-148-56.500-204.500 0L60.200 244.300z"/></svg>
<div class="t" style="top:767.00px;font-size:16px;color:#d0d3d9;letter-spacing:0.344px;left:835.90px;">phauer.com</div>
<svg style="position:absolute;left:818.70px;top:790.20px;" width="14.00" height="16.00" viewBox="0 0 14 16"><g fill="#d0d3d9"><rect x="3" y="0" width="2" height="4" rx="1"/><rect x="9" y="0" width="2" height="4" rx="1"/><path d="M0 3.5 Q0 2 1.500 2 H12.500 Q14 2 14 3.500 V5 H0Z"/><path d="M0 6 H14 V14.500 Q14 16 12.500 16 H1.500 Q0 16 0 14.500Z"/></g><g stroke="#262626" stroke-width="1" fill="none"><path d="M4.900 6.500V15.500M9.100 6.500V15.500M0.500 9.300H13.500M0.500 12.600H13.500"/></g></svg>
<div class="t" style="top:791.00px;font-size:16px;color:#d0d3d9;letter-spacing:0.305px;left:837.85px;">Oct 31, 2023</div>
<div style="position:absolute;left:1094px;top:746px;width:64px;height:64px;border-radius:16px;overflow:hidden;border-radius:0;overflow:visible;"><div style="position:absolute;left:25px;top:1px;width:15px;height:16px;border-radius:5px;background:#3b5d99;filter:blur(2.600px)"></div><div style="position:absolute;left:25px;top:24px;width:15px;height:16px;border-radius:5px;background:#4b4b50;filter:blur(2.600px)"></div><div style="position:absolute;left:25px;top:46px;width:15px;height:16px;border-radius:5px;background:#3b5d99;filter:blur(2.600px)"></div></div>
<div class="card" style="left:1199px;top:681px;width:381px;height:150px;"></div>
<div class="t" style="top:710.00px;font-size:14px;color:#d0d3d9;left:1220.00px;">6</div>
<div class="t" style="top:707.00px;font-size:18px;color:#fff;left:1231.45px;">Bookmark File Format | Microsoft L...</div>
<svg style="position:absolute;left:1536.50px;top:714.19px;" width="17.50" height="4.03" viewBox="0 0 17.5 4.025"><g fill="#e4e4e4"><circle cx="2.0125" cy="2.0125" r="2.0125"/><circle cx="8.75" cy="2.0125" r="2.0125"/><circle cx="15.4875" cy="2.0125" r="2.0125"/></g></svg>
<svg style="position:absolute;left:1220.00px;top:741.00px;" width="14.00" height="14.00" viewBox="0 0 512 512"><path fill="#ffffff" d="M64 480H448c35.300 0 64-28.700 64-64V160c0-35.300-28.700-64-64-64H288c-10.100 0-19.600-4.700-25.600-12.800L243.200 57.600C231.100 41.500 212.100 32 192 32H64C28.700 32 0 60.700 0 96V416c0 35.300 28.700 64 64 64z"/></svg>
<div class="t" style="top:739.00px;font-size:16px;color:#fff;letter-spacing:0.325px;left:1237.20px;">Unorganized</div>
<svg style="position:absolute;left:1220.00px;top:770.40px;" width="14.00" height="11.20" viewBox="0 0 640 512"><path fill="#d0d3d9" d="M579.8 267.7c56.5-56.5 56.5-148 0-204.5c-50-50-128.800-56.500-186.300-15.400l-1.600 1.100c-14.400 10.300-17.700 30.300-7.400 44.600s30.300 17.700 44.600 7.400l1.600-1.100c32.100-22.900 76-19.300 103.800 8.600c31.500 31.500 31.500 82.500 0 114L422.300 334.800c-31.500 31.500-82.500 31.500-114 0c-27.900-27.900-31.500-71.800-8.600-103.800l1.100-1.600c10.300-14.400 6.900-34.400-7.400-44.600s-34.400-6.900-44.600 7.400l-1.100 1.600C206.500 251.200 213 330 263 380c56.500 56.500 148 56.500 204.500 0L579.800 267.700zM60.200 244.300c-56.500 56.500-56.500 148 0 204.500c50 50 128.800 56.500 186.300 15.400l1.600-1.100c14.400-10.300 17.700-30.300 7.400-44.600s-30.300-17.700-44.600-7.400l-1.600 1.100c-32.100 22.900-76 19.300-103.800-8.600C74 372 74 321 105.500 289.500L217.700 177.200c31.500-31.500 82.500-31.500 114 0c27.900 27.900 31.500 71.800 8.600 103.900l-1.100 1.600c-10.300 14.400-6.900 34.400 7.400 44.600s34.400 6.900 44.600-7.400l1.100-1.600C433.500 260.800 427 182 377 132c-56.500-56.500-148-56.500-204.500 0L60.200 244.300z"/></svg>
<div class="t" style="top:767.00px;font-size:16px;color:#d0d3d9;letter-spacing:0.378px;left:1237.85px;">learn.microsoft.com</div>
<svg style="position:absolute;left:1220.70px;top:790.20px;" width="14.00" height="16.00" viewBox="0 0 14 16"><g fill="#d0d3d9"><rect x="3" y="0" width="2" height="4" rx="1"/><rect x="9" y="0" width="2" height="4" rx="1"/><path d="M0 3.5 Q0 2 1.500 2 H12.500 Q14 2 14 3.500 V5 H0Z"/><path d="M0 6 H14 V14.500 Q14 16 12.500 16 H1.500 Q0 16 0 14.500Z"/></g><g stroke="#262626" stroke-width="1" fill="none"><path d="M4.900 6.500V15.500M9.100 6.500V15.500M0.500 9.300H13.500M0.500 12.600H13.500"/></g></svg>
<div class="t" style="top:791.00px;font-size:16px;color:#d0d3d9;letter-spacing:0.250px;left:1239.85px;">Oct 12, 2023</div>
<div style="position:absolute;left:1495px;top:746px;width:64px;height:64px;border-radius:16px;overflow:hidden;background:#1f1f1f;"><div style="position:absolute;left:0;top:0;width:30.500px;height:30.500px;background:#9a4a2c"></div><div style="position:absolute;left:33.500px;top:0;width:30.500px;height:30.500px;background:#5c892b"></div><div style="position:absolute;left:0;top:33.500px;width:30.500px;height:30.500px;background:#3d6fa8"></div><div style="position:absolute;left:33.500px;top:33.500px;width:30.500px;height:30.500px;background:#aa882c"></div></div>
<div class="card" style="left:396px;top:903px;width:381px;height:150px;"></div>
<div class="t" style="top:932.00px;font-size:14px;color:#d0d3d9;left:416.65px;">1</div>
<div class="t" style="top:929.00px;font-size:18px;color:#fff;letter-spacing:-0.026px;left:425.75px;">Health Trends That Should Go Viral...</div>
<svg style="position:absolute;left:733.50px;top:936.19px;" width="17.50" height="4.03" viewBox="0 0 17.5 4.025"><g fill="#e4e4e4"><circle cx="2.0125" cy="2.0125" r="2.0125"/><circle cx="8.75" cy="2.0125" r="2.0125"/><circle cx="15.4875" cy="2.0125" r="2.0125"/></g></svg>
<svg style="position:absolute;left:417.00px;top:963.00px;" width="14.00" height="14.00" viewBox="0 0 512 512"><path fill="#ec1fa4" d="M64 480H448c35.300 0 64-28.700 64-64V160c0-35.300-28.700-64-64-64H288c-10.100 0-19.600-4.700-25.600-12.800L243.200 57.600C231.100 41.500 212.100 32 192 32H64C28.700 32 0 60.700 0 96V416c0 35.300 28.700 64 64 64z"/></svg>
<div class="t" style="top:961.00px;font-size:16px;color:#fff;letter-spacing:0.172px;left:434.10px;">Health And Wellness</div>
<svg style="position:absolute;left:417.00px;top:992.40px;" width="14.00" height="11.20" viewBox="0 0 640 512"><path fill="#d0d3d9" d="M579.8 267.7c56.5-56.5 56.5-148 0-204.5c-50-50-128.800-56.500-186.300-15.400l-1.600 1.100c-14.400 10.300-17.700 30.300-7.400 44.600s30.300 17.700 44.600 7.400l1.600-1.100c32.100-22.900 76-19.300 103.800 8.600c31.500 31.500 31.500 82.500 0 114L422.300 334.800c-31.500 31.500-82.500 31.500-114 0c-27.900-27.900-31.500-71.800-8.600-103.800l1.100-1.600c10.300-14.400 6.900-34.400-7.400-44.600s-34.400-6.900-44.600 7.400l-1.100 1.600C206.500 251.200 213 330 263 380c56.500 56.500 148 56.500 204.500 0L579.800 267.700zM60.200 244.300c-56.500 56.500-56.500 148 0 204.500c50 50 128.800 56.500 186.300 15.400l1.600-1.100c14.400-10.300 17.700-30.300 7.400-44.600s-30.300-17.700-44.600-7.400l-1.600 1.100c-32.100 22.900-76 19.300-103.800-8.600C74 372 74 321 105.500 289.500L217.700 177.200c31.500-31.500 82.500-31.500 114 0c27.900 27.900 31.500 71.800 8.600 103.900l-1.100 1.600c-10.300 14.400-6.900 34.400 7.400 44.600s34.400 6.900 44.600-7.400l1.100-1.600C433.500 260.800 427 182 377 132c-56.500-56.500-148-56.500-204.500 0L60.200 244.300z"/></svg>
<div class="t" style="top:989.00px;font-size:16px;color:#d0d3d9;letter-spacing:0.244px;left:434.80px;">health.clevelandclinic.org</div>
<svg style="position:absolute;left:417.70px;top:1012.20px;" width="14.00" height="16.00" viewBox="0 0 14 16"><g fill="#d0d3d9"><rect x="3" y="0" width="2" height="4" rx="1"/><rect x="9" y="0" width="2" height="4" rx="1"/><path d="M0 3.5 Q0 2 1.500 2 H12.500 Q14 2 14 3.500 V5 H0Z"/><path d="M0 6 H14 V14.500 Q14 16 12.500 16 H1.500 Q0 16 0 14.500Z"/></g><g stroke="#262626" stroke-width="1" fill="none"><path d="M4.900 6.500V15.500M9.100 6.500V15.500M0.500 9.300H13.500M0.500 12.600H13.500"/></g></svg>
<div class="t" style="top:1013.00px;font-size:16px;color:#d0d3d9;letter-spacing:0.100px;left:436.85px;">Oct 11, 2023</div>
<div style="position:absolute;left:692px;top:968px;width:64px;height:64px;border-radius:16px;overflow:hidden;background:linear-gradient(#2e4884 0,#2e4884 50%,#204b30 50%,#204b30 100%);"><svg width="64" height="64" viewBox="0 0 64 64" style="position:absolute;left:0;top:0"><defs><filter id="fb" x="-20%" y="-20%" width="140%" height="140%"><feGaussianBlur stdDeviation="0.800"/></filter></defs><g filter="url(#fb)"><rect x="30.200" y="-2" width="3.600" height="68" fill="#9bb8ac"/><rect x="-2" y="30" width="68" height="3.800" fill="#9bb8ac"/><rect x="14" y="14.200" width="36" height="35.600" rx="4.500" fill="#a9a9a9"/></g></svg></div>
<div class="card" style="left:797px;top:903px;width:382px;height:150px;"></div>
<div class="t" style="top:932.00px;font-size:14px;color:#d0d3d9;left:818.00px;">2</div>
<div class="t" style="top:929.00px;font-size:18px;color:#fff;letter-spacing:-0.107px;left:829.45px;">10 Common Financial Mistakes</div>
<svg style="position:absolute;left:1135.50px;top:936.19px;" width="17.50" height="4.03" viewBox="0 0 17.5 4.025"><g fill="#e4e4e4"><circle cx="2.0125" cy="2.0125" r="2.0125"/><circle cx="8.75" cy="2.0125" r="2.0125"/><circle cx="15.4875" cy="2.0125" r="2.0125"/></g></svg>
<svg style="position:absolute;left:818.00px;top:963.00px;" width="14.00" height="14.00" viewBox="0 0 512 512"><path fill="#55c857" d="M64 480H448c35.300 0 64-28.700 64-64V160c0-35.300-28.700-64-64-64H288c-10.100 0-19.600-4.700-25.600-12.800L243.200 57.600C231.100 41.500 212.100 32 192 32H64C28.700 32 0 60.700 0 96V416c0 35.300 28.700 64 64 64z"/></svg>
<div class="t" style="top:961.00px;font-size:16px;color:#fff;letter-spacing:0.027px;left:835.10px;">Personal Finance</div>
<svg style="position:absolute;left:818.00px;top:992.40px;" width="14.00" height="11.20" viewBox="0 0 640 512"><path fill="#d0d3d9" d="M579.8 267.7c56.5-56.5 56.5-148 0-204.5c-50-50-128.800-56.500-186.300-15.400l-1.600 1.100c-14.400 10.300-17.700 30.300-7.400 44.600s30.300 17.700 44.600 7.400l1.600-1.100c32.100-22.900 76-19.300 103.800 8.600c31.500 31.500 31.500 82.500 0 114L422.300 334.800c-31.500 31.500-82.500 31.500-114 0c-27.900-27.900-31.500-71.800-8.600-103.800l1.100-1.600c10.300-14.400 6.900-34.400-7.400-44.600s-34.400-6.900-44.600 7.400l-1.100 1.600C206.500 251.200 213 330 263 380c56.500 56.500 148 56.500 204.500 0L579.800 267.700zM60.200 244.300c-56.500 56.500-56.500 148 0 204.500c50 50 128.800 56.500 186.300 15.400l1.600-1.100c14.400-10.300 17.700-30.300 7.400-44.600s-30.300-17.700-44.600-7.400l-1.600 1.100c-32.100 22.900-76 19.300-103.800-8.600C74 372 74 321 105.500 289.500L217.700 177.200c31.500-31.500 82.500-31.500 114 0c27.900 27.900 31.500 71.800 8.600 103.900l-1.100 1.600c-10.300 14.400-6.900 34.400 7.400 44.600s34.400 6.900 44.600-7.400l1.100-1.600C433.500 260.800 427 182 377 132c-56.500-56.500-148-56.500-204.500 0L60.200 244.300z"/></svg>
<div class="t" style="top:989.00px;font-size:16px;color:#d0d3d9;letter-spacing:0.286px;left:836.95px;">www.prosper.com</div>
<svg style="position:absolute;left:818.70px;top:1012.20px;" width="14.00" height="16.00" viewBox="0 0 14 16"><g fill="#d0d3d9"><rect x="3" y="0" width="2" height="4" rx="1"/><rect x="9" y="0" width="2" height="4" rx="1"/><path d="M0 3.5 Q0 2 1.500 2 H12.500 Q14 2 14 3.500 V5 H0Z"/><path d="M0 6 H14 V14.500 Q14 16 12.500 16 H1.500 Q0 16 0 14.500Z"/></g><g stroke="#262626" stroke-width="1" fill="none"><path d="M4.900 6.500V15.500M9.100 6.500V15.500M0.500 9.300H13.500M0.500 12.600H13.500"/></g></svg>
<div class="t" style="top:1013.00px;font-size:16px;color:#d0d3d9;letter-spacing:0.100px;left:837.85px;">Oct 11, 2023</div>
<div style="position:absolute;left:1094px;top:968px;width:64px;height:64px;border-radius:16px;overflow:hidden;border-radius:0;"><svg width="64" height="64" viewBox="0 0 64 64" style="position:absolute;left:0;top:0"><defs><filter id="fb" x="-20%" y="-20%" width="140%" height="140%"><feGaussianBlur stdDeviation="0.800"/></filter></defs><g filter="url(#fb)"><path d="M54.800 9 A24.800 24.800 0 0 0 20.200 44 Z" fill="#a05a22"/><path d="M8.900 53.200 A23.700 23.700 0 0 0 46.100 23.800 L39.500 21.500 Z" fill="#8e2556"/></g></svg></div>
<div class="card" style="left:1199px;top:903px;width:381px;height:150px;"></div>
<div class="t" style="top:932.00px;font-size:14px;color:#d0d3d9;left:1220.20px;">3</div>
<div class="t" style="top:929.00px;font-size:18px;color:#fff;letter-spacing:-0.031px;left:1230.95px;">Best Places To Visit In 2023 | Best I...</div>
<svg style="position:absolute;left:1536.50px;top:936.19px;" width="17.50" height="4.03" viewBox="0 0 17.5 4.025"><g fill="#e4e4e4"><circle cx="2.0125" cy="2.0125" r="2.0125"/><circle cx="8.75" cy="2.0125" r="2.0125"/><circle cx="15.4875" cy="2.0125" r="2.0125"/></g></svg>
<svg style="position:absolute;left:1220.00px;top:963.00px;" width="14.00" height="14.00" viewBox="0 0 512 512"><path fill="#d7da33" d="M64 480H448c35.300 0 64-28.700 64-64V160c0-35.300-28.700-64-64-64H288c-10.100 0-19.600-4.700-25.600-12.800L243.200 57.600C231.100 41.500 212.100 32 192 32H64C28.700 32 0 60.700 0 96V416c0 35.300 28.700 64 64 64z"/></svg>
<div class="t" style="top:961.00px;font-size:16px;color:#fff;letter-spacing:0.110px;left:1238.05px;">Travel</div>
<svg style="position:absolute;left:1220.00px;top:992.40px;" width="14.00" height="11.20" viewBox="0 0 640 512"><path fill="#d0d3d9" d="M579.8 267.7c56.5-56.5 56.5-148 0-204.5c-50-50-128.800-56.500-186.300-15.400l-1.600 1.100c-14.400 10.300-17.700 30.300-7.400 44.600s30.300 17.700 44.600 7.400l1.600-1.100c32.100-22.900 76-19.300 103.800 8.600c31.500 31.500 31.500 82.500 0 114L422.300 334.800c-31.500 31.500-82.500 31.500-114 0c-27.900-27.900-31.500-71.800-8.600-103.800l1.100-1.600c10.300-14.400 6.900-34.400-7.400-44.600s-34.400-6.900-44.600 7.400l-1.100 1.600C206.500 251.200 213 330 263 380c56.500 56.500 148 56.500 204.500 0L579.800 267.700zM60.200 244.300c-56.500 56.500-56.500 148 0 204.500c50 50 128.800 56.500 186.300 15.400l1.600-1.100c14.400-10.300 17.700-30.300 7.400-44.600s-30.300-17.700-44.600-7.400l-1.600 1.100c-32.100 22.900-76 19.300-103.800-8.600C74 372 74 321 105.500 289.500L217.700 177.200c31.500-31.500 82.500-31.500 114 0c27.900 27.900 31.500 71.800 8.600 103.900l-1.100 1.600c-10.300 14.400-6.900 34.400 7.400 44.600s34.400 6.900 44.600-7.400l1.100-1.600C433.500 260.800 427 182 377 132c-56.500-56.500-148-56.500-204.500 0L60.200 244.300z"/></svg>
<div class="t" style="top:989.00px;font-size:16px;color:#d0d3d9;letter-spacing:0.263px;left:1238.95px;">www.lonelyplanet.com</div>
<svg style="position:absolute;left:1220.70px;top:1012.20px;" width="14.00" height="16.00" viewBox="0 0 14 16"><g fill="#d0d3d9"><rect x="3" y="0" width="2" height="4" rx="1"/><rect x="9" y="0" width="2" height="4" rx="1"/><path d="M0 3.5 Q0 2 1.500 2 H12.500 Q14 2 14 3.500 V5 H0Z"/><path d="M0 6 H14 V14.500 Q14 16 12.500 16 H1.500 Q0 16 0 14.500Z"/></g><g stroke="#262626" stroke-width="1" fill="none"><path d="M4.900 6.500V15.500M9.100 6.500V15.500M0.500 9.300H13.500M0.500 12.600H13.500"/></g></svg>
<div class="t" style="top:1013.00px;font-size:16px;color:#d0d3d9;letter-spacing:0.215px;left:1239.85px;">Oct 7, 2023</div>
<div style="position:absolute;left:1495px;top:968px;width:64px;height:64px;border-radius:16px;overflow:hidden;background:#32329a;"><div class="t" style="left:8.500px;top:4px;font-weight:700;font-size:48px;letter-spacing:0.500px;color:#b3b9c0;-webkit-text-stroke:0;transform:scaleX(1.09);transform-origin:left;filter:blur(.5px)">lp</div></div>
<div class="card" style="left:396px;top:1073px;width:381px;height:150px;"></div>
<div class="t" style="top:1102.00px;font-size:14px;color:#d0d3d9;left:417.40px;">4</div>
<div class="t" style="top:1099.00px;font-size:18px;color:#fff;letter-spacing:-0.022px;left:428.85px;">12 Daily Habits To Achieve A Healt...</div>
<svg style="position:absolute;left:733.50px;top:1106.19px;" width="17.50" height="4.03" viewBox="0 0 17.5 4.025"><g fill="#e4e4e4"><circle cx="2.0125" cy="2.0125" r="2.0125"/><circle cx="8.75" cy="2.0125" r="2.0125"/><circle cx="15.4875" cy="2.0125" r="2.0125"/></g></svg>
<svg style="position:absolute;left:417.00px;top:1133.00px;" width="14.00" height="14.00" viewBox="0 0 512 512"><path fill="#ec1fa4" d="M64 480H448c35.300 0 64-28.700 64-64V160c0-35.300-28.700-64-64-64H288c-10.100 0-19.600-4.700-25.600-12.800L243.200 57.600C231.100 41.500 212.100 32 192 32H64C28.700 32 0 60.700 0 96V416c0 35.300 28.700 64 64 64z"/></svg>
<div class="t" style="top:1131.00px;font-size:16px;color:#fff;letter-spacing:0.172px;left:434.10px;">Health And Wellness</div>
<svg style="position:absolute;left:417.00px;top:1162.40px;" width="14.00" height="11.20" viewBox="0 0 640 512"><path fill="#d0d3d9" d="M579.8 267.7c56.5-56.5 56.5-148 0-204.5c-50-50-128.800-56.500-186.300-15.400l-1.600 1.100c-14.400 10.300-17.700 30.300-7.400 44.600s30.300 17.700 44.600 7.400l1.600-1.100c32.100-22.900 76-19.300 103.800 8.600c31.500 31.500 31.500 82.500 0 114L422.300 334.800c-31.500 31.500-82.500 31.500-114 0c-27.900-27.900-31.500-71.800-8.600-103.800l1.100-1.600c10.300-14.400 6.900-34.400-7.400-44.600s-34.400-6.900-44.600 7.400l-1.100 1.600C206.500 251.200 213 330 263 380c56.500 56.500 148 56.500 204.500 0L579.800 267.700zM60.200 244.300c-56.500 56.500-56.500 148 0 204.500c50 50 128.800 56.500 186.300 15.400l1.600-1.100c14.400-10.300 17.700-30.300 7.400-44.600s-30.300-17.700-44.600-7.400l-1.600 1.100c-32.100 22.900-76 19.300-103.800-8.600C74 372 74 321 105.500 289.500L217.700 177.200c31.500-31.500 82.500-31.500 114 0c27.900 27.900 31.500 71.800 8.600 103.900l-1.100 1.600c-10.300 14.400-6.900 34.400 7.400 44.600s34.400 6.900 44.600-7.400l1.100-1.600C433.500 260.800 427 182 377 132c-56.500-56.500-148-56.500-204.500 0L60.200 244.300z"/></svg>
<div class="t" style="top:1159.00px;font-size:16px;color:#d0d3d9;letter-spacing:0.332px;left:435.95px;">www.cnet.com</div>
<svg style="position:absolute;left:417.70px;top:1182.20px;" width="14.00" height="16.00" viewBox="0 0 14 16"><g fill="#d0d3d9"><rect x="3" y="0" width="2" height="4" rx="1"/><rect x="9" y="0" width="2" height="4" rx="1"/><path d="M0 3.5 Q0 2 1.500 2 H12.500 Q14 2 14 3.500 V5 H0Z"/><path d="M0 6 H14 V14.500 Q14 16 12.500 16 H1.500 Q0 16 0 14.500Z"/></g><g stroke="#262626" stroke-width="1" fill="none"><path d="M4.900 6.500V15.500M9.100 6.500V15.500M0.500 9.300H13.500M0.500 12.600H13.500"/></g></svg>
<div class="t" style="top:1183.00px;font-size:16px;color:#d0d3d9;letter-spacing:0.215px;left:436.85px;">Oct 7, 2023</div>
<div style="position:absolute;left:692px;top:1138px;width:64px;height:64px;border-radius:16px;overflow:hidden;border-radius:0;"><div class="t" style="left:2.300px;top:-4px;font-family:'Liberation Serif',serif;font-weight:700;font-size:73px;color:#8e2e28;-webkit-text-stroke:0;transform:scaleX(1.14);transform-origin:left;filter:blur(.5px)">C</div></div>
<div class="card" style="left:797px;top:1073px;width:382px;height:150px;"></div>
<div class="t" style="top:1102.00px;font-size:14px;color:#d0d3d9;left:818.15px;">5</div>
<div class="t" style="top:1099.00px;font-size:18px;color:#fff;letter-spacing:0.043px;left:829.35px;">Forbes Advisor U.S. Outlook 2023 ...</div>
<svg style="position:absolute;left:1135.50px;top:1106.19px;" width="17.50" height="4.03" viewBox="0 0 17.5 4.025"><g fill="#e4e4e4"><circle cx="2.0125" cy="2.0125" r="2.0125"/><circle cx="8.75" cy="2.0125" r="2.0125"/><circle cx="15.4875" cy="2.0125" r="2.0125"/></g></svg>
<svg style="position:absolute;left:818.00px;top:1133.00px;" width="14.00" height="14.00" viewBox="0 0 512 512"><path fill="#55c857" d="M64 480H448c35.300 0 64-28.700 64-64V160c0-35.300-28.700-64-64-64H288c-10.100 0-19.600-4.700-25.600-12.800L243.200 57.600C231.100 41.500 212.100 32 192 32H64C28.700 32 0 60.700 0 96V416c0 35.300 28.700 64 64 64z"/></svg>
<div class="t" style="top:1131.00px;font-size:16px;color:#fff;letter-spacing:0.027px;left:835.10px;">Personal Finance</div>
<svg style="position:absolute;left:818.00px;top:1162.40px;" width="14.00" height="11.20" viewBox="0 0 640 512"><path fill="#d0d3d9" d="M579.8 267.7c56.5-56.5 56.5-148 0-204.5c-50-50-128.800-56.500-186.300-15.400l-1.600 1.100c-14.400 10.300-17.700 30.300-7.400 44.600s30.300 17.700 44.600 7.400l1.600-1.100c32.100-22.900 76-19.300 103.800 8.600c31.500 31.500 31.500 82.500 0 114L422.300 334.800c-31.500 31.500-82.500 31.500-114 0c-27.900-27.900-31.500-71.800-8.600-103.800l1.100-1.600c10.300-14.400 6.900-34.400-7.400-44.600s-34.400-6.900-44.600 7.400l-1.100 1.600C206.500 251.200 213 330 263 380c56.500 56.500 148 56.500 204.500 0L579.800 267.700zM60.200 244.300c-56.500 56.500-56.500 148 0 204.500c50 50 128.800 56.500 186.300 15.400l1.600-1.100c14.400-10.300 17.700-30.300 7.400-44.600s-30.300-17.700-44.600-7.400l-1.600 1.100c-32.100 22.900-76 19.300-103.800-8.600C74 372 74 321 105.500 289.500L217.700 177.200c31.500-31.500 82.500-31.500 114 0c27.900 27.900 31.500 71.800 8.600 103.900l-1.100 1.600c-10.300 14.400-6.900 34.400 7.400 44.600s34.400 6.900 44.600-7.400l1.100-1.600C433.500 260.800 427 182 377 132c-56.500-56.500-148-56.500-204.500 0L60.200 244.300z"/></svg>
<div class="t" style="top:1159.00px;font-size:16px;color:#d0d3d9;letter-spacing:0.277px;left:836.95px;">www.forbes.com</div>
<svg style="position:absolute;left:818.70px;top:1182.20px;" width="14.00" height="16.00" viewBox="0 0 14 16"><g fill="#d0d3d9"><rect x="3" y="0" width="2" height="4" rx="1"/><rect x="9" y="0" width="2" height="4" rx="1"/><path d="M0 3.5 Q0 2 1.500 2 H12.500 Q14 2 14 3.500 V5 H0Z"/><path d="M0 6 H14 V14.500 Q14 16 12.500 16 H1.500 Q0 16 0 14.500Z"/></g><g stroke="#262626" stroke-width="1" fill="none"><path d="M4.900 6.500V15.500M9.100 6.500V15.500M0.500 9.300H13.500M0.500 12.600H13.500"/></g></svg>
<div class="t" style="top:1183.00px;font-size:16px;color:#d0d3d9;letter-spacing:0.215px;left:837.85px;">Oct 7, 2023</div>
<div style="position:absolute;left:1094px;top:1138px;width:64px;height:64px;border-radius:16px;overflow:hidden;background:#1c1c1b;"><div class="t" style="left:12.500px;top:-1px;font-family:'Liberation Serif',serif;font-weight:700;font-size:64px;color:#a9a9a9;-webkit-text-stroke:0;filter:blur(.4px)">F</div></div>
<div class="card" style="left:1199px;top:1073px;width:381px;height:150px;"></div>
<div class="t" style="top:1102.00px;font-size:14px;color:#d0d3d9;left:1220.00px;">6</div>
<div class="t" style="top:1099.00px;font-size:18px;color:#fff;letter-spacing:-0.047px;left:1231.35px;">Make 2023 Your Best Financial Yea...</div>
<svg style="position:absolute;left:1536.50px;top:1106.19px;" width="17.50" height="4.03" viewBox="0 0 17.5 4.025"><g fill="#e4e4e4"><circle cx="2.0125" cy="2.0125" r="2.0125"/><circle cx="8.75" cy="2.0125" r="2.0125"/><circle cx="15.4875" cy="2.0125" r="2.0125"/></g></svg>
<svg style="position:absolute;left:1220.00px;top:1133.00px;" width="14.00" height="14.00" viewBox="0 0 512 512"><path fill="#55c857" d="M64 480H448c35.300 0 64-28.700 64-64V160c0-35.300-28.700-64-64-64H288c-10.100 0-19.600-4.700-25.600-12.800L243.200 57.600C231.100 41.500 212.100 32 192 32H64C28.700 32 0 60.700 0 96V416c0 35.300 28.700 64 64 64z"/></svg>
<div class="t" style="top:1131.00px;font-size:16px;color:#fff;letter-spacing:0.027px;left:1237.10px;">Personal Finance</div>
<svg style="position:absolute;left:1220.00px;top:1162.40px;" width="14.00" height="11.20" viewBox="0 0 640 512"><path fill="#d0d3d9" d="M579.8 267.7c56.5-56.5 56.5-148 0-204.5c-50-50-128.800-56.500-186.300-15.400l-1.600 1.100c-14.400 10.300-17.700 30.300-7.400 44.600s30.300 17.700 44.600 7.400l1.600-1.100c32.100-22.900 76-19.300 103.800 8.600c31.500 31.500 31.500 82.500 0 114L422.300 334.800c-31.500 31.500-82.500 31.500-114 0c-27.900-27.900-31.500-71.800-8.600-103.800l1.100-1.600c10.300-14.400 6.900-34.400-7.400-44.600s-34.400-6.900-44.600 7.400l-1.100 1.600C206.500 251.200 213 330 263 380c56.500 56.500 148 56.500 204.500 0L579.800 267.700zM60.200 244.300c-56.500 56.500-56.500 148 0 204.500c50 50 128.800 56.500 186.300 15.400l1.600-1.100c14.400-10.300 17.700-30.300 7.400-44.600s-30.300-17.700-44.600-7.400l-1.600 1.100c-32.100 22.900-76 19.300-103.800-8.600C74 372 74 321 105.500 289.500L217.700 177.200c31.500-31.500 82.500-31.500 114 0c27.900 27.900 31.500 71.800 8.600 103.900l-1.100 1.600c-10.300 14.400-6.900 34.400 7.400 44.600s34.400 6.900 44.600-7.400l1.100-1.600C433.500 260.800 427 182 377 132c-56.500-56.500-148-56.500-204.500 0L60.200 244.300z"/></svg>
<div class="t" style="top:1159.00px;font-size:16px;color:#d0d3d9;letter-spacing:0.291px;left:1238.95px;">www.fool.com</div>
<svg style="position:absolute;left:1220.70px;top:1182.20px;" width="14.00" height="16.00" viewBox="0 0 14 16"><g fill="#d0d3d9"><rect x="3" y="0" width="2" height="4" rx="1"/><rect x="9" y="0" width="2" height="4" rx="1"/><path d="M0 3.5 Q0 2 1.500 2 H12.500 Q14 2 14 3.500 V5 H0Z"/><path d="M0 6 H14 V14.500 Q14 16 12.500 16 H1.500 Q0 16 0 14.500Z"/></g><g stroke="#262626" stroke-width="1" fill="none"><path d="M4.900 6.500V15.500M9.100 6.500V15.500M0.500 9.300H13.500M0.500 12.600H13.500"/></g></svg>
<div class="t" style="top:1183.00px;font-size:16px;color:#d0d3d9;letter-spacing:0.215px;left:1239.85px;">Oct 7, 2023</div>
<div style="position:absolute;left:1495px;top:1138px;width:64px;height:64px;border-radius:16px;overflow:hidden;border-radius:0;"><svg width="64" height="64" viewBox="0 0 64 64" style="position:absolute;left:0;top:0"><defs><filter id="fb" x="-20%" y="-20%" width="140%" height="140%"><feGaussianBlur stdDeviation="0.800"/></filter></defs><g filter="url(#fb)"><path d="M1.800 36 Q5 18 17.200 16.900 Q26 16.500 31.700 23.600 L31.700 46.500 Q26 47 21.500 44.700 Q21 31 11.800 30.800 Q5 31 1.800 36Z" fill="#912b52"/><path d="M62 36 Q59 18 46.200 16.900 Q37.500 16.500 31.700 23.600 L31.700 46.500 Q37.500 47 42 44.700 Q42.500 31 51.700 30.800 Q58.500 31 62 36Z" fill="#651a6b"/><rect x="0.300" y="39.200" width="4.800" height="5.600" rx="1.500" fill="#b08e28"/><rect x="58.700" y="39.200" width="4.800" height="5.600" rx="1.500" fill="#b08e28"/></g></svg></div>
</div></div><div id="rim"></div></body></html>
